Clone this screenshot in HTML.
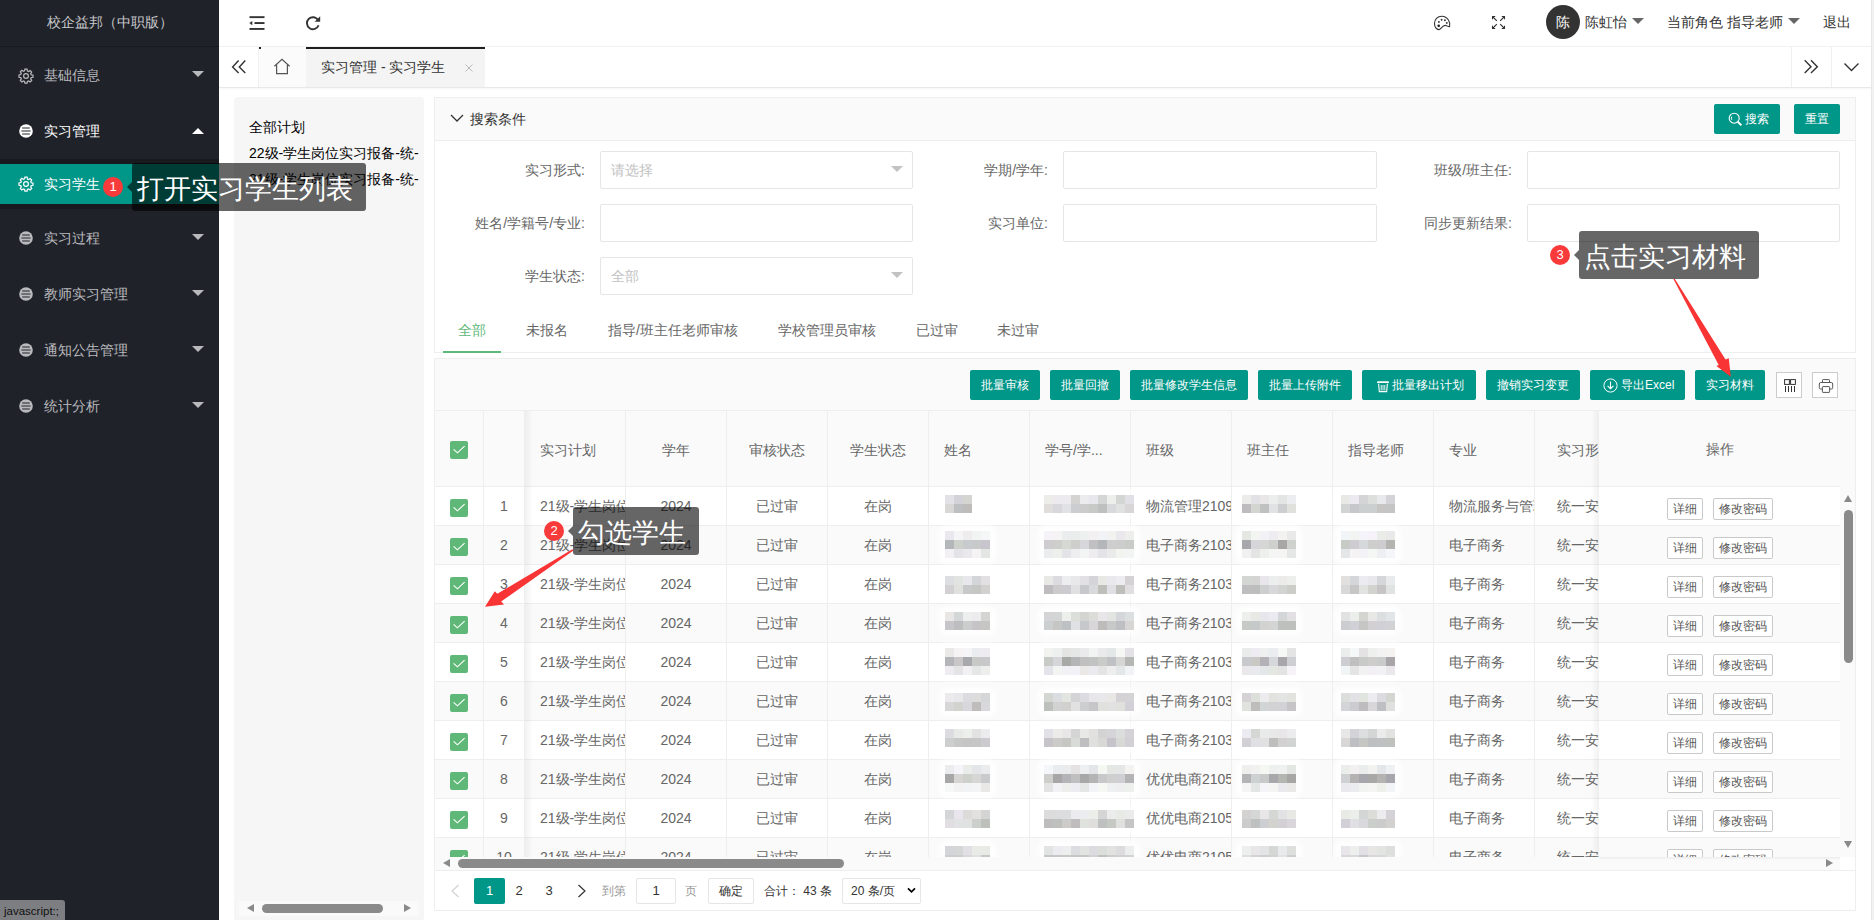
<!DOCTYPE html><html><head><meta charset="utf-8"><style>
*{margin:0;padding:0;box-sizing:border-box}
html,body{width:1874px;height:920px;overflow:hidden;background:#fff;font-family:"Liberation Sans",sans-serif;font-size:14px;color:#333}
.ab{position:absolute}
.t{position:absolute;white-space:nowrap;line-height:20px}
.sb{left:0;top:0;width:219px;height:920px;background:#20222a}
.mi{color:#b9babd}
.tri-d{width:0;height:0;border-left:6px solid transparent;border-right:6px solid transparent;border-top:6px solid #b9babd}
.tri-u{width:0;height:0;border-left:6px solid transparent;border-right:6px solid transparent;border-bottom:6px solid #fff}
.btn{position:absolute;height:30px;background:#009688;color:#fff;font-size:12px;line-height:31px;text-align:center;border-radius:2px;white-space:nowrap}
.inp{position:absolute;height:38px;border:1px solid #e6e6e6;background:#fff;border-radius:2px}
.lbl{position:absolute;color:#666;text-align:right;white-space:nowrap;line-height:20px}
.cb{position:absolute;width:18px;height:18px;background:#5fb878;border-radius:2px}
.cell{position:absolute;color:#666;white-space:nowrap;overflow:hidden;line-height:20px}
.ob{position:absolute;height:22px;border:1px solid #c9c9c9;background:#fff;color:#555;font-size:12px;line-height:20px;text-align:center;border-radius:2px}
.tip{position:absolute;height:48px;background:rgba(0,0,0,.6);border-radius:3px;color:#fff;font-size:27px;line-height:53px;text-align:left;padding-left:5px;white-space:nowrap}
.badge{position:absolute;width:20px;height:20px;border-radius:10px;background:#f83a3a;color:#fff;font-size:13px;line-height:20px;text-align:center}
</style></head><body>

<div class="ab sb"></div>
<div class="ab" style="left:0;top:46px;width:219px;height:1px;background:#1a1b21"></div>
<div class="t" style="left:0;top:12px;width:219px;text-align:center;color:#c9cacc">校企益邦（中职版）</div>
<svg class="ab" style="left:18px;top:68px" width="16" height="16" viewBox="0 0 16 16"><g fill="none" stroke="#b9babd" stroke-width="1.2"><path d="M6.9 1.2h2.2l.35 1.8 1.2.5 1.5-1 1.55 1.55-1 1.5.5 1.2 1.8.35v2.2l-1.8.35-.5 1.2 1 1.5-1.55 1.55-1.5-1-1.2.5-.35 1.8H6.9l-.35-1.8-1.2-.5-1.5 1-1.55-1.55 1-1.5-.5-1.2-1.8-.35V6.9l1.8-.35.5-1.2-1-1.5L3.85 2.3l1.5 1 1.2-.5z"/><circle cx="8" cy="8" r="2.4"/></g></svg>
<div class="t" style="left:44px;top:65px;color:#b9babd">基础信息</div>
<div class="ab tri-d" style="left:192px;top:71px"></div>
<svg class="ab" style="left:19px;top:124px" width="14" height="14" viewBox="0 0 14 14"><circle cx="7" cy="7" r="6.8" fill="#fff"/><path d="M3.2 4h7.6M2.4 7h9.2M3.2 10h7.6" stroke="#20222a" stroke-width="1"/></svg>
<div class="t" style="left:44px;top:121px;color:#fff">实习管理</div>
<div class="ab tri-u" style="left:192px;top:128px"></div>
<svg class="ab" style="left:19px;top:231px" width="14" height="14" viewBox="0 0 14 14"><circle cx="7" cy="7" r="6.8" fill="#b9babd"/><path d="M3.2 4h7.6M2.4 7h9.2M3.2 10h7.6" stroke="#20222a" stroke-width="1"/></svg>
<div class="t" style="left:44px;top:228px;color:#b9babd">实习过程</div>
<div class="ab tri-d" style="left:192px;top:234px"></div>
<svg class="ab" style="left:19px;top:287px" width="14" height="14" viewBox="0 0 14 14"><circle cx="7" cy="7" r="6.8" fill="#b9babd"/><path d="M3.2 4h7.6M2.4 7h9.2M3.2 10h7.6" stroke="#20222a" stroke-width="1"/></svg>
<div class="t" style="left:44px;top:284px;color:#b9babd">教师实习管理</div>
<div class="ab tri-d" style="left:192px;top:290px"></div>
<svg class="ab" style="left:19px;top:343px" width="14" height="14" viewBox="0 0 14 14"><circle cx="7" cy="7" r="6.8" fill="#b9babd"/><path d="M3.2 4h7.6M2.4 7h9.2M3.2 10h7.6" stroke="#20222a" stroke-width="1"/></svg>
<div class="t" style="left:44px;top:340px;color:#b9babd">通知公告管理</div>
<div class="ab tri-d" style="left:192px;top:346px"></div>
<svg class="ab" style="left:19px;top:399px" width="14" height="14" viewBox="0 0 14 14"><circle cx="7" cy="7" r="6.8" fill="#b9babd"/><path d="M3.2 4h7.6M2.4 7h9.2M3.2 10h7.6" stroke="#20222a" stroke-width="1"/></svg>
<div class="t" style="left:44px;top:396px;color:#b9babd">统计分析</div>
<div class="ab tri-d" style="left:192px;top:402px"></div>
<div class="ab" style="left:0;top:159px;width:219px;height:50px;background:#191a20"></div>
<div class="ab" style="left:0;top:164px;width:219px;height:40px;background:#009688"></div>
<svg class="ab" style="left:18px;top:176px" width="16" height="16" viewBox="0 0 16 16"><g fill="none" stroke="#fff" stroke-width="1.2"><path d="M6.9 1.2h2.2l.35 1.8 1.2.5 1.5-1 1.55 1.55-1 1.5.5 1.2 1.8.35v2.2l-1.8.35-.5 1.2 1 1.5-1.55 1.55-1.5-1-1.2.5-.35 1.8H6.9l-.35-1.8-1.2-.5-1.5 1-1.55-1.55 1-1.5-.5-1.2-1.8-.35V6.9l1.8-.35.5-1.2-1-1.5L3.85 2.3l1.5 1 1.2-.5z"/><circle cx="8" cy="8" r="2.4"/></g></svg>
<div class="t" style="left:44px;top:174px;color:#fff">实习学生</div>
<div class="ab" style="left:0;top:900px;width:65px;height:20px;background:#7d7e82;border-top-right-radius:3px"></div>
<div class="t" style="left:4px;top:902px;font-size:11.5px;line-height:18px;color:#111">javascript:;</div>
<div class="ab" style="left:219px;top:46px;width:1652px;height:1px;background:#f0f0f0"></div>
<svg class="ab" style="left:248px;top:14px" width="18" height="18" viewBox="0 0 18 18"><g fill="#333"><rect x="1.5" y="2.2" width="15" height="1.9"/><rect x="6.5" y="8.1" width="10" height="1.9"/><rect x="1.5" y="14" width="15" height="1.9"/><path d="M1.3 9.05L4.3 6.9v4.3z"/></g></svg>
<svg class="ab" style="left:304px;top:14px" width="18" height="18" viewBox="0 0 18 18"><path d="M14.2 6.3A6 6 0 1 0 14.6 11.2" fill="none" stroke="#333" stroke-width="1.9"/><path d="M16.2 2.2v5.6h-5.6z" fill="#333"/></svg>
<svg class="ab" style="left:1430px;top:12px" width="24" height="20" viewBox="0 0 24 20"><path d="M19.6 14.5C20.9 10.5 17.6 4.4 12 4.3C7.2 4.2 4.5 7.8 4.5 11.4C4.5 15.2 6.6 17.6 8.8 17.6C11 17.6 12 13.4 15.2 13.4C17 13.4 18.5 15.2 19.6 14.5Z" fill="none" stroke="#333" stroke-width="1.1"/><circle cx="8.9" cy="9.9" r=".95" fill="#333"/><circle cx="11.6" cy="7.8" r=".95" fill="#333"/><circle cx="14.9" cy="8.2" r=".95" fill="#333"/><circle cx="16.8" cy="10.9" r=".95" fill="#333"/><circle cx="8.7" cy="13.8" r="1.35" fill="#222"/></svg>
<svg class="ab" style="left:1490px;top:14px" width="17" height="17" viewBox="0 0 17 17"><g fill="none" stroke="#333" stroke-width="1.1"><path d="M5.2 2.5H2.5V5.2M2.5 2.5l4.3 4.3M11.8 2.5h2.7v2.7M14.5 2.5l-4.3 4.3M2.5 11.8v2.7h2.7M2.5 14.5l4.3-4.3M14.5 11.8v2.7h-2.7M14.5 14.5l-4.3-4.3"/></g></svg>
<div class="ab" style="left:1546px;top:5px;width:34px;height:34px;border-radius:17px;background:#333;color:#fff;text-align:center;line-height:34px">陈</div>
<div class="t" style="left:1585px;top:12px;color:#333">陈虹怡</div>
<div class="ab" style="left:1632px;top:18px;width:0;height:0;border-left:6px solid transparent;border-right:6px solid transparent;border-top:6px solid #666"></div>
<div class="t" style="left:1667px;top:12px;color:#333">当前角色 指导老师</div>
<div class="ab" style="left:1788px;top:18px;width:0;height:0;border-left:6px solid transparent;border-right:6px solid transparent;border-top:6px solid #666"></div>
<div class="t" style="left:1823px;top:12px;color:#333">退出</div>
<div class="ab" style="left:1871px;top:0;width:3px;height:920px;background:#f2f2f2;border-left:1px solid #e8e8e8"></div>
<div class="ab" style="left:219px;top:87px;width:1652px;height:1px;background:#e8e8e8"></div>
<div class="ab" style="left:219px;top:88px;width:1652px;height:2px;background:linear-gradient(#f6f6f6,#fff)"></div>
<div class="ab" style="left:258px;top:47px;width:1px;height:40px;background:#f0f0f0"></div>
<div class="ab" style="left:259px;top:47px;width:47px;height:40px;background:#fbfbfb"></div>
<div class="ab" style="left:259px;top:47px;width:2px;height:2px;background:#222"></div>
<svg class="ab" style="left:231px;top:59px" width="16" height="16" viewBox="0 0 16 16"><path d="M7.6 1.5L1.6 7.9l6 6.1M14.3 1.5l-6 6.4 6 6.1" fill="none" stroke="#333" stroke-width="1.4"/></svg>
<svg class="ab" style="left:273px;top:58px" width="18" height="17" viewBox="0 0 18 17"><path d="M1.4 8.3L9 1.2l7.6 7.1M3.6 6.5v9.2h10.8V6.5" fill="none" stroke="#555" stroke-width="1.2"/></svg>
<div class="ab" style="left:306px;top:47px;width:179px;height:40px;background:#f4f4f4"></div>
<div class="ab" style="left:306px;top:47px;width:179px;height:2px;background:#1e1e1e"></div>
<div class="t" style="left:321px;top:57px;color:#333">实习管理 - 实习学生</div>
<svg class="ab" style="left:465px;top:64px" width="8" height="8" viewBox="0 0 8 8"><path d="M.5.5l7 7M7.5.5l-7 7" stroke="#bbb" stroke-width="1"/></svg>
<div class="ab" style="left:1791px;top:47px;width:1px;height:40px;background:#f0f0f0"></div>
<div class="ab" style="left:1831px;top:47px;width:1px;height:40px;background:#f0f0f0"></div>
<svg class="ab" style="left:1803px;top:59px" width="16" height="16" viewBox="0 0 16 16"><path d="M1.7 1.3l6.3 6.4-6.3 6.3M8 1.3l6.3 6.4L8 14" fill="none" stroke="#333" stroke-width="1.4"/></svg>
<svg class="ab" style="left:1843px;top:62px" width="17" height="11" viewBox="0 0 17 11"><path d="M1.5 1.5l7 7 7-7" fill="none" stroke="#333" stroke-width="1.4"/></svg>
<div class="ab" style="left:234px;top:97px;width:190px;height:823px;background:#f6f6f6;border-radius:4px 4px 0 0"></div>
<div class="t" style="left:249px;top:117px;color:#000">全部计划</div>
<div class="t" style="left:249px;top:143px;color:#000;width:172px;overflow:hidden">22级-学生岗位实习报备-统-</div>
<div class="t" style="left:249px;top:169px;color:#000;width:172px;overflow:hidden">21级-学生岗位实习报备-统-</div>
<div class="ab" style="left:239px;top:901px;width:180px;height:15px;background:#fafafa"></div>
<div class="ab" style="left:247px;top:904px;width:0;height:0;border-top:4.5px solid transparent;border-bottom:4.5px solid transparent;border-right:7px solid #8a8a8a"></div>
<div class="ab" style="left:404px;top:904px;width:0;height:0;border-top:4.5px solid transparent;border-bottom:4.5px solid transparent;border-left:7px solid #8a8a8a"></div>
<div class="ab" style="left:262px;top:904px;width:121px;height:9px;border-radius:4.5px;background:#8a8a8a"></div>
<div class="ab" style="left:434px;top:97px;width:1422px;height:256px;border:1px solid #eee;border-bottom:0"></div>
<div class="ab" style="left:435px;top:98px;width:1420px;height:42px;background:#fafafa"></div>
<div class="ab" style="left:435px;top:140px;width:1420px;height:1px;background:#eee"></div>
<svg class="ab" style="left:450px;top:114px" width="14" height="9" viewBox="0 0 14 9"><path d="M1 1l6 6 6-6" fill="none" stroke="#333" stroke-width="1.3"/></svg>
<div class="t" style="left:470px;top:109px;color:#333">搜索条件</div>
<div class="btn" style="left:1714px;top:104px;width:66px"><svg style="position:absolute;left:14px;top:8px" width="15" height="15" viewBox="0 0 15 15"><circle cx="6.2" cy="6.2" r="5" fill="none" stroke="#fff" stroke-width="1.1"/><path d="M3.8 4.6a3 3 0 0 0 0 3.2" fill="none" stroke="#fff" stroke-width="1"/><path d="M9.8 9.8l3.6 3.6" stroke="#fff" stroke-width="2"/></svg><span style="position:absolute;left:31px;top:0">搜索</span></div>
<div class="btn" style="left:1794px;top:104px;width:46px">重置</div>
<div class="lbl" style="left:385px;top:160px;width:200px">实习形式:</div>
<div class="inp" style="left:600px;top:151px;width:313px"></div>
<div class="t" style="left:611px;top:160px;color:#c2c2c2">请选择</div>
<div class="ab" style="left:891px;top:166px;width:0;height:0;border-left:6px solid transparent;border-right:6px solid transparent;border-top:6px solid #c2c2c2"></div>
<div class="lbl" style="left:848px;top:160px;width:200px">学期/学年:</div>
<div class="inp" style="left:1063px;top:151px;width:314px"></div>
<div class="lbl" style="left:1312px;top:160px;width:200px">班级/班主任:</div>
<div class="inp" style="left:1527px;top:151px;width:313px"></div>
<div class="lbl" style="left:385px;top:213px;width:200px">姓名/学籍号/专业:</div>
<div class="inp" style="left:600px;top:204px;width:313px"></div>
<div class="lbl" style="left:848px;top:213px;width:200px">实习单位:</div>
<div class="inp" style="left:1063px;top:204px;width:314px"></div>
<div class="lbl" style="left:1312px;top:213px;width:200px">同步更新结果:</div>
<div class="inp" style="left:1527px;top:204px;width:313px"></div>
<div class="lbl" style="left:385px;top:266px;width:200px">学生状态:</div>
<div class="inp" style="left:600px;top:257px;width:313px"></div>
<div class="t" style="left:611px;top:266px;color:#c2c2c2">全部</div>
<div class="ab" style="left:891px;top:272px;width:0;height:0;border-left:6px solid transparent;border-right:6px solid transparent;border-top:6px solid #c2c2c2"></div>
<div class="ab" style="left:435px;top:352px;width:1420px;height:1px;background:#eee"></div>
<div class="ab" style="left:443px;top:351px;width:58px;height:2px;background:#5fb878"></div>
<div class="t" style="left:372px;width:200px;text-align:center;top:320px;color:#5fb878">全部</div>
<div class="t" style="left:447px;width:200px;text-align:center;top:320px;color:#666">未报名</div>
<div class="t" style="left:573px;width:200px;text-align:center;top:320px;color:#666">指导/班主任老师审核</div>
<div class="t" style="left:727px;width:200px;text-align:center;top:320px;color:#666">学校管理员审核</div>
<div class="t" style="left:837px;width:200px;text-align:center;top:320px;color:#666">已过审</div>
<div class="t" style="left:918px;width:200px;text-align:center;top:320px;color:#666">未过审</div>
<div class="ab" style="left:434px;top:358px;width:1422px;height:553px;border:1px solid #eee"></div>
<div class="ab" style="left:435px;top:359px;width:1420px;height:51px;background:#fafafa"></div>
<div class="ab" style="left:435px;top:410px;width:1420px;height:1px;background:#eee"></div>
<div class="btn" style="left:970px;top:370px;width:70px">批量审核</div>
<div class="btn" style="left:1050px;top:370px;width:70px">批量回撤</div>
<div class="btn" style="left:1130px;top:370px;width:118px">批量修改学生信息</div>
<div class="btn" style="left:1258px;top:370px;width:94px">批量上传附件</div>
<div class="btn" style="left:1362px;top:370px;width:114px"><svg style="position:absolute;left:14px;top:10px" width="14" height="14" viewBox="0 0 14 14"><rect x="1" y="1.3" width="12" height="1.8" rx=".9" fill="#fff"/><path d="M2.6 3.6L3.3 11.6H10.7L11.4 3.6" fill="none" stroke="#fff" stroke-width="1.1"/><path d="M5.2 5v5.5M7 5v5.5M8.8 5v5.5" stroke="#fff" stroke-width=".9"/></svg><span style="position:absolute;left:30px;top:0">批量移出计划</span></div>
<div class="btn" style="left:1486px;top:370px;width:94px">撤销实习变更</div>
<div class="btn" style="left:1590px;top:370px;width:95px"><svg style="position:absolute;left:13px;top:8px" width="15" height="15" viewBox="0 0 15 15"><circle cx="7.5" cy="7.5" r="6.6" fill="none" stroke="#fff" stroke-width="1"/><path d="M7.5 3.5v7M4.6 7.8l2.9 2.9 2.9-2.9" fill="none" stroke="#fff" stroke-width="1.1"/></svg><span style="position:absolute;left:31px;top:0">导出Excel</span></div>
<div class="btn" style="left:1695px;top:370px;width:70px">实习材料</div>
<div class="ab" style="left:1776px;top:372px;width:26px;height:26px;border:1px solid #ccc;background:#fff"></div>
<svg class="ab" style="left:1781px;top:377px" width="16" height="16" viewBox="0 0 16 16"><g fill="none" stroke="#333" stroke-width="1"><rect x="3.6" y="2.6" width="4.8" height="4.8"/><rect x="9.6" y="2.6" width="4.8" height="4.8"/><path d="M4.5 9v6M7.5 9v6M10.5 9v6M13.5 9v6"/></g></svg>
<div class="ab" style="left:1812px;top:372px;width:26px;height:26px;border:1px solid #ccc;background:#fff"></div>
<svg class="ab" style="left:1817px;top:377px" width="18" height="18" viewBox="0 0 18 18"><g fill="none" stroke="#555" stroke-width="1"><path d="M5.5 5.5V3.2Q5.5 2.6 6.1 2.6h5.8q.6 0 .6.6V5.5"/><path d="M5.2 12H3.6q-1.3 0-1.3-1.3V7q0-1.5 1.5-1.5h10.4q1.5 0 1.5 1.5v3.7q0 1.3-1.3 1.3h-1.6"/><rect x="5.4" y="9.6" width="7.2" height="5.8" rx=".6"/></g></svg>
<div class="ab" style="left:435px;top:411px;width:1420px;height:76px;background:#fafafa"></div>
<div class="ab" style="left:435px;top:486px;width:1405px;height:1px;background:#eee"></div>
<div class="ab" style="left:435px;top:487px;width:1405px;height:39px;background:#fff"></div>
<div class="ab" style="left:435px;top:525px;width:1405px;height:1px;background:#eee"></div>
<div class="ab" style="left:435px;top:526px;width:1405px;height:39px;background:#fafafa"></div>
<div class="ab" style="left:435px;top:564px;width:1405px;height:1px;background:#eee"></div>
<div class="ab" style="left:435px;top:565px;width:1405px;height:39px;background:#fff"></div>
<div class="ab" style="left:435px;top:603px;width:1405px;height:1px;background:#eee"></div>
<div class="ab" style="left:435px;top:604px;width:1405px;height:39px;background:#fafafa"></div>
<div class="ab" style="left:435px;top:642px;width:1405px;height:1px;background:#eee"></div>
<div class="ab" style="left:435px;top:643px;width:1405px;height:39px;background:#fff"></div>
<div class="ab" style="left:435px;top:681px;width:1405px;height:1px;background:#eee"></div>
<div class="ab" style="left:435px;top:682px;width:1405px;height:39px;background:#fafafa"></div>
<div class="ab" style="left:435px;top:720px;width:1405px;height:1px;background:#eee"></div>
<div class="ab" style="left:435px;top:721px;width:1405px;height:39px;background:#fff"></div>
<div class="ab" style="left:435px;top:759px;width:1405px;height:1px;background:#eee"></div>
<div class="ab" style="left:435px;top:760px;width:1405px;height:39px;background:#fafafa"></div>
<div class="ab" style="left:435px;top:798px;width:1405px;height:1px;background:#eee"></div>
<div class="ab" style="left:435px;top:799px;width:1405px;height:39px;background:#fff"></div>
<div class="ab" style="left:435px;top:837px;width:1405px;height:1px;background:#eee"></div>
<div class="ab" style="left:435px;top:838px;width:1405px;height:19px;background:#fafafa"></div>
<div class="ab" style="left:483px;top:411px;width:1px;height:446px;background:#eee"></div>
<div class="ab" style="left:524px;top:411px;width:1px;height:446px;background:#eee"></div>
<div class="ab" style="left:625px;top:411px;width:1px;height:446px;background:#eee"></div>
<div class="ab" style="left:726px;top:411px;width:1px;height:446px;background:#eee"></div>
<div class="ab" style="left:827px;top:411px;width:1px;height:446px;background:#eee"></div>
<div class="ab" style="left:928px;top:411px;width:1px;height:446px;background:#eee"></div>
<div class="ab" style="left:1029px;top:411px;width:1px;height:446px;background:#eee"></div>
<div class="ab" style="left:1130px;top:411px;width:1px;height:446px;background:#eee"></div>
<div class="ab" style="left:1231px;top:411px;width:1px;height:446px;background:#eee"></div>
<div class="ab" style="left:1332px;top:411px;width:1px;height:446px;background:#eee"></div>
<div class="ab" style="left:1433px;top:411px;width:1px;height:446px;background:#eee"></div>
<div class="ab" style="left:1534px;top:411px;width:1px;height:446px;background:#eee"></div>
<div class="cell" style="left:540px;top:440px;width:84px">实习计划</div>
<div class="cell" style="left:626px;top:440px;width:100px;text-align:center">学年</div>
<div class="cell" style="left:727px;top:440px;width:100px;text-align:center">审核状态</div>
<div class="cell" style="left:828px;top:440px;width:100px;text-align:center">学生状态</div>
<div class="cell" style="left:944px;top:440px;width:84px">姓名</div>
<div class="cell" style="left:1045px;top:440px;width:84px">学号/学...</div>
<div class="cell" style="left:1146px;top:440px;width:84px">班级</div>
<div class="cell" style="left:1247px;top:440px;width:84px">班主任</div>
<div class="cell" style="left:1348px;top:440px;width:84px">指导老师</div>
<div class="cell" style="left:1449px;top:440px;width:84px">专业</div>
<div class="cell" style="left:1535px;top:440px;width:100px;text-align:center">实习形式</div>
<div class="cb" style="left:450px;top:441px"><svg style="position:absolute;left:3px;top:4px" width="12" height="10" viewBox="0 0 12 10"><path d="M.6 4.4L4.4 7.8L11.6 1.1" fill="none" stroke="#fff" stroke-width="1.1"/></svg></div>
<div class="ab" style="left:435px;top:487px;width:1405px;height:370px;overflow:hidden"><div class="ab" style="left:-435px;top:-487px;width:1874px;height:920px"><div class="cb" style="left:450px;top:499px"><svg style="position:absolute;left:3px;top:4px" width="12" height="10" viewBox="0 0 12 10"><path d="M.6 4.4L4.4 7.8L11.6 1.1" fill="none" stroke="#fff" stroke-width="1.1"/></svg></div><div class="cell" style="left:484px;top:496px;width:40px;text-align:center">1</div><div class="cell" style="left:540px;top:496px;width:85px">21级-学生岗位实习报备</div><div class="cell" style="left:626px;top:496px;width:100px;text-align:center">2024</div><div class="cell" style="left:727px;top:496px;width:100px;text-align:center">已过审</div><div class="cell" style="left:828px;top:496px;width:100px;text-align:center">在岗</div><div class="ab" style="left:938px;top:489px;width:41px;height:30px;border-radius:9px;background:rgba(255,255,255,.75);filter:blur(2px)"></div><div class="ab" style="left:945px;top:495px;width:9px;height:9px;background:rgb(226,225,229)"></div><div class="ab" style="left:954px;top:495px;width:9px;height:9px;background:rgb(212,210,217)"></div><div class="ab" style="left:963px;top:495px;width:9px;height:9px;background:rgb(212,212,209)"></div><div class="ab" style="left:945px;top:504px;width:9px;height:9px;background:rgb(216,215,213)"></div><div class="ab" style="left:954px;top:504px;width:9px;height:9px;background:rgb(190,191,193)"></div><div class="ab" style="left:963px;top:504px;width:9px;height:9px;background:rgb(190,189,188)"></div><div class="ab" style="left:1037px;top:489px;width:104px;height:30px;border-radius:9px;background:rgba(255,255,255,.75);filter:blur(2px)"></div><div class="ab" style="left:1044px;top:495px;width:9px;height:9px;background:rgb(236,237,233)"></div><div class="ab" style="left:1053px;top:495px;width:9px;height:9px;background:rgb(236,234,236)"></div><div class="ab" style="left:1062px;top:495px;width:9px;height:9px;background:rgb(236,234,239)"></div><div class="ab" style="left:1071px;top:495px;width:9px;height:9px;background:rgb(212,211,209)"></div><div class="ab" style="left:1080px;top:495px;width:9px;height:9px;background:rgb(236,235,237)"></div><div class="ab" style="left:1089px;top:495px;width:9px;height:9px;background:rgb(232,231,237)"></div><div class="ab" style="left:1098px;top:495px;width:9px;height:9px;background:rgb(212,214,213)"></div><div class="ab" style="left:1107px;top:495px;width:9px;height:9px;background:rgb(236,239,235)"></div><div class="ab" style="left:1116px;top:495px;width:9px;height:9px;background:rgb(212,214,212)"></div><div class="ab" style="left:1125px;top:495px;width:9px;height:9px;background:rgb(226,224,231)"></div><div class="ab" style="left:1044px;top:504px;width:9px;height:9px;background:rgb(224,222,221)"></div><div class="ab" style="left:1053px;top:504px;width:9px;height:9px;background:rgb(216,215,220)"></div><div class="ab" style="left:1062px;top:504px;width:9px;height:9px;background:rgb(224,226,227)"></div><div class="ab" style="left:1071px;top:504px;width:9px;height:9px;background:rgb(204,205,208)"></div><div class="ab" style="left:1080px;top:504px;width:9px;height:9px;background:rgb(204,204,204)"></div><div class="ab" style="left:1089px;top:504px;width:9px;height:9px;background:rgb(198,201,198)"></div><div class="ab" style="left:1098px;top:504px;width:9px;height:9px;background:rgb(190,192,191)"></div><div class="ab" style="left:1107px;top:504px;width:9px;height:9px;background:rgb(216,217,218)"></div><div class="ab" style="left:1116px;top:504px;width:9px;height:9px;background:rgb(224,225,225)"></div><div class="ab" style="left:1125px;top:504px;width:9px;height:9px;background:rgb(216,214,214)"></div><div class="cell" style="left:1146px;top:496px;width:85px">物流管理2109</div><div class="ab" style="left:1235px;top:489px;width:68px;height:30px;border-radius:9px;background:rgba(255,255,255,.75);filter:blur(2px)"></div><div class="ab" style="left:1242px;top:495px;width:9px;height:9px;background:rgb(236,237,235)"></div><div class="ab" style="left:1251px;top:495px;width:9px;height:9px;background:rgb(226,225,230)"></div><div class="ab" style="left:1260px;top:495px;width:9px;height:9px;background:rgb(232,230,230)"></div><div class="ab" style="left:1269px;top:495px;width:9px;height:9px;background:rgb(236,238,238)"></div><div class="ab" style="left:1278px;top:495px;width:9px;height:9px;background:rgb(226,229,228)"></div><div class="ab" style="left:1287px;top:495px;width:9px;height:9px;background:rgb(236,237,240)"></div><div class="ab" style="left:1242px;top:504px;width:9px;height:9px;background:rgb(190,188,191)"></div><div class="ab" style="left:1251px;top:504px;width:9px;height:9px;background:rgb(210,213,208)"></div><div class="ab" style="left:1260px;top:504px;width:9px;height:9px;background:rgb(190,193,191)"></div><div class="ab" style="left:1269px;top:504px;width:9px;height:9px;background:rgb(224,226,228)"></div><div class="ab" style="left:1278px;top:504px;width:9px;height:9px;background:rgb(204,207,207)"></div><div class="ab" style="left:1287px;top:504px;width:9px;height:9px;background:rgb(224,224,221)"></div><div class="ab" style="left:1334px;top:489px;width:68px;height:30px;border-radius:9px;background:rgba(255,255,255,.75);filter:blur(2px)"></div><div class="ab" style="left:1341px;top:495px;width:9px;height:9px;background:rgb(232,232,231)"></div><div class="ab" style="left:1350px;top:495px;width:9px;height:9px;background:rgb(236,234,240)"></div><div class="ab" style="left:1359px;top:495px;width:9px;height:9px;background:rgb(212,211,213)"></div><div class="ab" style="left:1368px;top:495px;width:9px;height:9px;background:rgb(220,223,220)"></div><div class="ab" style="left:1377px;top:495px;width:9px;height:9px;background:rgb(232,233,236)"></div><div class="ab" style="left:1386px;top:495px;width:9px;height:9px;background:rgb(212,211,216)"></div><div class="ab" style="left:1341px;top:504px;width:9px;height:9px;background:rgb(210,212,211)"></div><div class="ab" style="left:1350px;top:504px;width:9px;height:9px;background:rgb(198,199,203)"></div><div class="ab" style="left:1359px;top:504px;width:9px;height:9px;background:rgb(204,207,207)"></div><div class="ab" style="left:1368px;top:504px;width:9px;height:9px;background:rgb(204,207,207)"></div><div class="ab" style="left:1377px;top:504px;width:9px;height:9px;background:rgb(198,197,196)"></div><div class="ab" style="left:1386px;top:504px;width:9px;height:9px;background:rgb(198,197,198)"></div><div class="cell" style="left:1449px;top:496px;width:85px">物流服务与管理</div><div class="cell" style="left:1535px;top:496px;width:100px;text-align:center">统一安排</div><div class="cb" style="left:450px;top:538px"><svg style="position:absolute;left:3px;top:4px" width="12" height="10" viewBox="0 0 12 10"><path d="M.6 4.4L4.4 7.8L11.6 1.1" fill="none" stroke="#fff" stroke-width="1.1"/></svg></div><div class="cell" style="left:484px;top:535px;width:40px;text-align:center">2</div><div class="cell" style="left:540px;top:535px;width:85px">21级-学生岗位实习报备</div><div class="cell" style="left:626px;top:535px;width:100px;text-align:center">2024</div><div class="cell" style="left:727px;top:535px;width:100px;text-align:center">已过审</div><div class="cell" style="left:828px;top:535px;width:100px;text-align:center">在岗</div><div class="ab" style="left:938px;top:525px;width:59px;height:39px;border-radius:9px;background:rgba(255,255,255,.75);filter:blur(2px)"></div><div class="ab" style="left:945px;top:531px;width:9px;height:9px;background:rgb(234,232,238)"></div><div class="ab" style="left:954px;top:531px;width:9px;height:9px;background:rgb(245,244,246)"></div><div class="ab" style="left:963px;top:531px;width:9px;height:9px;background:rgb(238,236,237)"></div><div class="ab" style="left:972px;top:531px;width:9px;height:9px;background:rgb(242,244,244)"></div><div class="ab" style="left:981px;top:531px;width:9px;height:9px;background:rgb(245,247,247)"></div><div class="ab" style="left:945px;top:540px;width:9px;height:9px;background:rgb(180,183,185)"></div><div class="ab" style="left:954px;top:540px;width:9px;height:9px;background:rgb(206,209,203)"></div><div class="ab" style="left:963px;top:540px;width:9px;height:9px;background:rgb(200,203,205)"></div><div class="ab" style="left:972px;top:540px;width:9px;height:9px;background:rgb(200,201,203)"></div><div class="ab" style="left:981px;top:540px;width:9px;height:9px;background:rgb(200,198,204)"></div><div class="ab" style="left:945px;top:549px;width:9px;height:9px;background:rgb(242,240,242)"></div><div class="ab" style="left:954px;top:549px;width:9px;height:9px;background:rgb(228,227,232)"></div><div class="ab" style="left:963px;top:549px;width:9px;height:9px;background:rgb(234,232,236)"></div><div class="ab" style="left:972px;top:549px;width:9px;height:9px;background:rgb(245,243,243)"></div><div class="ab" style="left:981px;top:549px;width:9px;height:9px;background:rgb(228,230,227)"></div><div class="ab" style="left:1037px;top:525px;width:104px;height:39px;border-radius:9px;background:rgba(255,255,255,.75);filter:blur(2px)"></div><div class="ab" style="left:1044px;top:531px;width:9px;height:9px;background:rgb(245,243,247)"></div><div class="ab" style="left:1053px;top:531px;width:9px;height:9px;background:rgb(245,243,243)"></div><div class="ab" style="left:1062px;top:531px;width:9px;height:9px;background:rgb(234,236,237)"></div><div class="ab" style="left:1071px;top:531px;width:9px;height:9px;background:rgb(234,237,235)"></div><div class="ab" style="left:1080px;top:531px;width:9px;height:9px;background:rgb(238,240,240)"></div><div class="ab" style="left:1089px;top:531px;width:9px;height:9px;background:rgb(242,240,240)"></div><div class="ab" style="left:1098px;top:531px;width:9px;height:9px;background:rgb(242,243,246)"></div><div class="ab" style="left:1107px;top:531px;width:9px;height:9px;background:rgb(242,242,240)"></div><div class="ab" style="left:1116px;top:531px;width:9px;height:9px;background:rgb(234,232,236)"></div><div class="ab" style="left:1125px;top:531px;width:9px;height:9px;background:rgb(238,239,237)"></div><div class="ab" style="left:1044px;top:540px;width:9px;height:9px;background:rgb(206,204,206)"></div><div class="ab" style="left:1053px;top:540px;width:9px;height:9px;background:rgb(206,206,205)"></div><div class="ab" style="left:1062px;top:540px;width:9px;height:9px;background:rgb(214,216,211)"></div><div class="ab" style="left:1071px;top:540px;width:9px;height:9px;background:rgb(206,206,204)"></div><div class="ab" style="left:1080px;top:540px;width:9px;height:9px;background:rgb(214,214,219)"></div><div class="ab" style="left:1089px;top:540px;width:9px;height:9px;background:rgb(192,191,194)"></div><div class="ab" style="left:1098px;top:540px;width:9px;height:9px;background:rgb(180,182,185)"></div><div class="ab" style="left:1107px;top:540px;width:9px;height:9px;background:rgb(206,206,206)"></div><div class="ab" style="left:1116px;top:540px;width:9px;height:9px;background:rgb(206,205,206)"></div><div class="ab" style="left:1125px;top:540px;width:9px;height:9px;background:rgb(200,203,200)"></div><div class="ab" style="left:1044px;top:549px;width:9px;height:9px;background:rgb(234,236,238)"></div><div class="ab" style="left:1053px;top:549px;width:9px;height:9px;background:rgb(238,241,235)"></div><div class="ab" style="left:1062px;top:549px;width:9px;height:9px;background:rgb(228,228,232)"></div><div class="ab" style="left:1071px;top:549px;width:9px;height:9px;background:rgb(238,237,240)"></div><div class="ab" style="left:1080px;top:549px;width:9px;height:9px;background:rgb(242,245,244)"></div><div class="ab" style="left:1089px;top:549px;width:9px;height:9px;background:rgb(238,236,238)"></div><div class="ab" style="left:1098px;top:549px;width:9px;height:9px;background:rgb(228,227,232)"></div><div class="ab" style="left:1107px;top:549px;width:9px;height:9px;background:rgb(234,234,234)"></div><div class="ab" style="left:1116px;top:549px;width:9px;height:9px;background:rgb(242,244,239)"></div><div class="ab" style="left:1125px;top:549px;width:9px;height:9px;background:rgb(242,245,244)"></div><div class="cell" style="left:1146px;top:535px;width:85px">电子商务2103</div><div class="ab" style="left:1235px;top:525px;width:68px;height:39px;border-radius:9px;background:rgba(255,255,255,.75);filter:blur(2px)"></div><div class="ab" style="left:1242px;top:531px;width:9px;height:9px;background:rgb(228,231,226)"></div><div class="ab" style="left:1251px;top:531px;width:9px;height:9px;background:rgb(242,245,242)"></div><div class="ab" style="left:1260px;top:531px;width:9px;height:9px;background:rgb(242,241,245)"></div><div class="ab" style="left:1269px;top:531px;width:9px;height:9px;background:rgb(238,236,241)"></div><div class="ab" style="left:1278px;top:531px;width:9px;height:9px;background:rgb(242,243,240)"></div><div class="ab" style="left:1287px;top:531px;width:9px;height:9px;background:rgb(234,233,233)"></div><div class="ab" style="left:1242px;top:540px;width:9px;height:9px;background:rgb(168,167,172)"></div><div class="ab" style="left:1251px;top:540px;width:9px;height:9px;background:rgb(214,213,218)"></div><div class="ab" style="left:1260px;top:540px;width:9px;height:9px;background:rgb(214,214,213)"></div><div class="ab" style="left:1269px;top:540px;width:9px;height:9px;background:rgb(206,208,205)"></div><div class="ab" style="left:1278px;top:540px;width:9px;height:9px;background:rgb(168,166,166)"></div><div class="ab" style="left:1287px;top:540px;width:9px;height:9px;background:rgb(206,209,205)"></div><div class="ab" style="left:1242px;top:549px;width:9px;height:9px;background:rgb(242,241,242)"></div><div class="ab" style="left:1251px;top:549px;width:9px;height:9px;background:rgb(228,228,228)"></div><div class="ab" style="left:1260px;top:549px;width:9px;height:9px;background:rgb(238,240,238)"></div><div class="ab" style="left:1269px;top:549px;width:9px;height:9px;background:rgb(245,245,246)"></div><div class="ab" style="left:1278px;top:549px;width:9px;height:9px;background:rgb(245,246,244)"></div><div class="ab" style="left:1287px;top:549px;width:9px;height:9px;background:rgb(228,231,230)"></div><div class="ab" style="left:1334px;top:525px;width:68px;height:39px;border-radius:9px;background:rgba(255,255,255,.75);filter:blur(2px)"></div><div class="ab" style="left:1341px;top:531px;width:9px;height:9px;background:rgb(242,245,247)"></div><div class="ab" style="left:1350px;top:531px;width:9px;height:9px;background:rgb(242,244,241)"></div><div class="ab" style="left:1359px;top:531px;width:9px;height:9px;background:rgb(245,244,250)"></div><div class="ab" style="left:1368px;top:531px;width:9px;height:9px;background:rgb(245,243,249)"></div><div class="ab" style="left:1377px;top:531px;width:9px;height:9px;background:rgb(234,236,231)"></div><div class="ab" style="left:1386px;top:531px;width:9px;height:9px;background:rgb(234,233,233)"></div><div class="ab" style="left:1341px;top:540px;width:9px;height:9px;background:rgb(200,202,198)"></div><div class="ab" style="left:1350px;top:540px;width:9px;height:9px;background:rgb(206,204,208)"></div><div class="ab" style="left:1359px;top:540px;width:9px;height:9px;background:rgb(214,216,219)"></div><div class="ab" style="left:1368px;top:540px;width:9px;height:9px;background:rgb(206,207,204)"></div><div class="ab" style="left:1377px;top:540px;width:9px;height:9px;background:rgb(206,204,206)"></div><div class="ab" style="left:1386px;top:540px;width:9px;height:9px;background:rgb(180,180,177)"></div><div class="ab" style="left:1341px;top:549px;width:9px;height:9px;background:rgb(228,230,232)"></div><div class="ab" style="left:1350px;top:549px;width:9px;height:9px;background:rgb(245,243,243)"></div><div class="ab" style="left:1359px;top:549px;width:9px;height:9px;background:rgb(242,242,247)"></div><div class="ab" style="left:1368px;top:549px;width:9px;height:9px;background:rgb(245,247,245)"></div><div class="ab" style="left:1377px;top:549px;width:9px;height:9px;background:rgb(238,239,243)"></div><div class="ab" style="left:1386px;top:549px;width:9px;height:9px;background:rgb(245,246,250)"></div><div class="cell" style="left:1449px;top:535px;width:85px">电子商务</div><div class="cell" style="left:1535px;top:535px;width:100px;text-align:center">统一安排</div><div class="cb" style="left:450px;top:577px"><svg style="position:absolute;left:3px;top:4px" width="12" height="10" viewBox="0 0 12 10"><path d="M.6 4.4L4.4 7.8L11.6 1.1" fill="none" stroke="#fff" stroke-width="1.1"/></svg></div><div class="cell" style="left:484px;top:574px;width:40px;text-align:center">3</div><div class="cell" style="left:540px;top:574px;width:85px">21级-学生岗位实习报备</div><div class="cell" style="left:626px;top:574px;width:100px;text-align:center">2024</div><div class="cell" style="left:727px;top:574px;width:100px;text-align:center">已过审</div><div class="cell" style="left:828px;top:574px;width:100px;text-align:center">在岗</div><div class="ab" style="left:938px;top:570px;width:59px;height:30px;border-radius:9px;background:rgba(255,255,255,.75);filter:blur(2px)"></div><div class="ab" style="left:945px;top:576px;width:9px;height:9px;background:rgb(220,223,225)"></div><div class="ab" style="left:954px;top:576px;width:9px;height:9px;background:rgb(226,228,226)"></div><div class="ab" style="left:963px;top:576px;width:9px;height:9px;background:rgb(232,231,235)"></div><div class="ab" style="left:972px;top:576px;width:9px;height:9px;background:rgb(212,213,216)"></div><div class="ab" style="left:981px;top:576px;width:9px;height:9px;background:rgb(226,224,226)"></div><div class="ab" style="left:945px;top:585px;width:9px;height:9px;background:rgb(210,208,210)"></div><div class="ab" style="left:954px;top:585px;width:9px;height:9px;background:rgb(224,224,222)"></div><div class="ab" style="left:963px;top:585px;width:9px;height:9px;background:rgb(198,201,200)"></div><div class="ab" style="left:972px;top:585px;width:9px;height:9px;background:rgb(198,198,197)"></div><div class="ab" style="left:981px;top:585px;width:9px;height:9px;background:rgb(210,209,208)"></div><div class="ab" style="left:1037px;top:570px;width:104px;height:30px;border-radius:9px;background:rgba(255,255,255,.75);filter:blur(2px)"></div><div class="ab" style="left:1044px;top:576px;width:9px;height:9px;background:rgb(232,233,231)"></div><div class="ab" style="left:1053px;top:576px;width:9px;height:9px;background:rgb(220,219,223)"></div><div class="ab" style="left:1062px;top:576px;width:9px;height:9px;background:rgb(236,237,238)"></div><div class="ab" style="left:1071px;top:576px;width:9px;height:9px;background:rgb(232,231,234)"></div><div class="ab" style="left:1080px;top:576px;width:9px;height:9px;background:rgb(226,224,228)"></div><div class="ab" style="left:1089px;top:576px;width:9px;height:9px;background:rgb(212,212,217)"></div><div class="ab" style="left:1098px;top:576px;width:9px;height:9px;background:rgb(232,233,229)"></div><div class="ab" style="left:1107px;top:576px;width:9px;height:9px;background:rgb(232,232,237)"></div><div class="ab" style="left:1116px;top:576px;width:9px;height:9px;background:rgb(236,236,241)"></div><div class="ab" style="left:1125px;top:576px;width:9px;height:9px;background:rgb(212,210,212)"></div><div class="ab" style="left:1044px;top:585px;width:9px;height:9px;background:rgb(190,188,191)"></div><div class="ab" style="left:1053px;top:585px;width:9px;height:9px;background:rgb(204,202,203)"></div><div class="ab" style="left:1062px;top:585px;width:9px;height:9px;background:rgb(204,203,207)"></div><div class="ab" style="left:1071px;top:585px;width:9px;height:9px;background:rgb(224,224,227)"></div><div class="ab" style="left:1080px;top:585px;width:9px;height:9px;background:rgb(198,200,203)"></div><div class="ab" style="left:1089px;top:585px;width:9px;height:9px;background:rgb(216,217,218)"></div><div class="ab" style="left:1098px;top:585px;width:9px;height:9px;background:rgb(190,190,187)"></div><div class="ab" style="left:1107px;top:585px;width:9px;height:9px;background:rgb(224,223,227)"></div><div class="ab" style="left:1116px;top:585px;width:9px;height:9px;background:rgb(190,190,187)"></div><div class="ab" style="left:1125px;top:585px;width:9px;height:9px;background:rgb(224,222,225)"></div><div class="cell" style="left:1146px;top:574px;width:85px">电子商务2103</div><div class="ab" style="left:1235px;top:570px;width:68px;height:30px;border-radius:9px;background:rgba(255,255,255,.75);filter:blur(2px)"></div><div class="ab" style="left:1242px;top:576px;width:9px;height:9px;background:rgb(212,214,212)"></div><div class="ab" style="left:1251px;top:576px;width:9px;height:9px;background:rgb(212,212,210)"></div><div class="ab" style="left:1260px;top:576px;width:9px;height:9px;background:rgb(232,230,234)"></div><div class="ab" style="left:1269px;top:576px;width:9px;height:9px;background:rgb(236,237,237)"></div><div class="ab" style="left:1278px;top:576px;width:9px;height:9px;background:rgb(236,235,233)"></div><div class="ab" style="left:1287px;top:576px;width:9px;height:9px;background:rgb(236,239,236)"></div><div class="ab" style="left:1242px;top:585px;width:9px;height:9px;background:rgb(190,189,191)"></div><div class="ab" style="left:1251px;top:585px;width:9px;height:9px;background:rgb(190,189,190)"></div><div class="ab" style="left:1260px;top:585px;width:9px;height:9px;background:rgb(204,207,205)"></div><div class="ab" style="left:1269px;top:585px;width:9px;height:9px;background:rgb(216,215,217)"></div><div class="ab" style="left:1278px;top:585px;width:9px;height:9px;background:rgb(210,212,209)"></div><div class="ab" style="left:1287px;top:585px;width:9px;height:9px;background:rgb(204,204,201)"></div><div class="ab" style="left:1334px;top:570px;width:68px;height:30px;border-radius:9px;background:rgba(255,255,255,.75);filter:blur(2px)"></div><div class="ab" style="left:1341px;top:576px;width:9px;height:9px;background:rgb(226,224,223)"></div><div class="ab" style="left:1350px;top:576px;width:9px;height:9px;background:rgb(212,215,217)"></div><div class="ab" style="left:1359px;top:576px;width:9px;height:9px;background:rgb(236,235,241)"></div><div class="ab" style="left:1368px;top:576px;width:9px;height:9px;background:rgb(232,231,236)"></div><div class="ab" style="left:1377px;top:576px;width:9px;height:9px;background:rgb(212,215,215)"></div><div class="ab" style="left:1386px;top:576px;width:9px;height:9px;background:rgb(232,234,235)"></div><div class="ab" style="left:1341px;top:585px;width:9px;height:9px;background:rgb(216,216,216)"></div><div class="ab" style="left:1350px;top:585px;width:9px;height:9px;background:rgb(198,198,198)"></div><div class="ab" style="left:1359px;top:585px;width:9px;height:9px;background:rgb(224,227,223)"></div><div class="ab" style="left:1368px;top:585px;width:9px;height:9px;background:rgb(210,210,207)"></div><div class="ab" style="left:1377px;top:585px;width:9px;height:9px;background:rgb(198,196,196)"></div><div class="ab" style="left:1386px;top:585px;width:9px;height:9px;background:rgb(224,227,225)"></div><div class="cell" style="left:1449px;top:574px;width:85px">电子商务</div><div class="cell" style="left:1535px;top:574px;width:100px;text-align:center">统一安排</div><div class="cb" style="left:450px;top:616px"><svg style="position:absolute;left:3px;top:4px" width="12" height="10" viewBox="0 0 12 10"><path d="M.6 4.4L4.4 7.8L11.6 1.1" fill="none" stroke="#fff" stroke-width="1.1"/></svg></div><div class="cell" style="left:484px;top:613px;width:40px;text-align:center">4</div><div class="cell" style="left:540px;top:613px;width:85px">21级-学生岗位实习报备</div><div class="cell" style="left:626px;top:613px;width:100px;text-align:center">2024</div><div class="cell" style="left:727px;top:613px;width:100px;text-align:center">已过审</div><div class="cell" style="left:828px;top:613px;width:100px;text-align:center">在岗</div><div class="ab" style="left:938px;top:606px;width:59px;height:30px;border-radius:9px;background:rgba(255,255,255,.75);filter:blur(2px)"></div><div class="ab" style="left:945px;top:612px;width:9px;height:9px;background:rgb(232,231,229)"></div><div class="ab" style="left:954px;top:612px;width:9px;height:9px;background:rgb(212,215,215)"></div><div class="ab" style="left:963px;top:612px;width:9px;height:9px;background:rgb(236,239,237)"></div><div class="ab" style="left:972px;top:612px;width:9px;height:9px;background:rgb(236,235,237)"></div><div class="ab" style="left:981px;top:612px;width:9px;height:9px;background:rgb(212,213,211)"></div><div class="ab" style="left:945px;top:621px;width:9px;height:9px;background:rgb(198,198,202)"></div><div class="ab" style="left:954px;top:621px;width:9px;height:9px;background:rgb(190,190,192)"></div><div class="ab" style="left:963px;top:621px;width:9px;height:9px;background:rgb(204,206,206)"></div><div class="ab" style="left:972px;top:621px;width:9px;height:9px;background:rgb(198,196,199)"></div><div class="ab" style="left:981px;top:621px;width:9px;height:9px;background:rgb(198,198,197)"></div><div class="ab" style="left:1037px;top:606px;width:104px;height:30px;border-radius:9px;background:rgba(255,255,255,.75);filter:blur(2px)"></div><div class="ab" style="left:1044px;top:612px;width:9px;height:9px;background:rgb(212,212,215)"></div><div class="ab" style="left:1053px;top:612px;width:9px;height:9px;background:rgb(212,213,213)"></div><div class="ab" style="left:1062px;top:612px;width:9px;height:9px;background:rgb(236,239,236)"></div><div class="ab" style="left:1071px;top:612px;width:9px;height:9px;background:rgb(220,222,217)"></div><div class="ab" style="left:1080px;top:612px;width:9px;height:9px;background:rgb(212,212,210)"></div><div class="ab" style="left:1089px;top:612px;width:9px;height:9px;background:rgb(220,221,217)"></div><div class="ab" style="left:1098px;top:612px;width:9px;height:9px;background:rgb(232,230,233)"></div><div class="ab" style="left:1107px;top:612px;width:9px;height:9px;background:rgb(226,229,226)"></div><div class="ab" style="left:1116px;top:612px;width:9px;height:9px;background:rgb(212,214,217)"></div><div class="ab" style="left:1125px;top:612px;width:9px;height:9px;background:rgb(220,223,223)"></div><div class="ab" style="left:1044px;top:621px;width:9px;height:9px;background:rgb(204,207,208)"></div><div class="ab" style="left:1053px;top:621px;width:9px;height:9px;background:rgb(198,198,197)"></div><div class="ab" style="left:1062px;top:621px;width:9px;height:9px;background:rgb(190,193,195)"></div><div class="ab" style="left:1071px;top:621px;width:9px;height:9px;background:rgb(224,225,229)"></div><div class="ab" style="left:1080px;top:621px;width:9px;height:9px;background:rgb(198,200,203)"></div><div class="ab" style="left:1089px;top:621px;width:9px;height:9px;background:rgb(216,214,216)"></div><div class="ab" style="left:1098px;top:621px;width:9px;height:9px;background:rgb(190,188,187)"></div><div class="ab" style="left:1107px;top:621px;width:9px;height:9px;background:rgb(198,201,200)"></div><div class="ab" style="left:1116px;top:621px;width:9px;height:9px;background:rgb(190,191,194)"></div><div class="ab" style="left:1125px;top:621px;width:9px;height:9px;background:rgb(216,214,213)"></div><div class="cell" style="left:1146px;top:613px;width:85px">电子商务2103</div><div class="ab" style="left:1235px;top:606px;width:68px;height:30px;border-radius:9px;background:rgba(255,255,255,.75);filter:blur(2px)"></div><div class="ab" style="left:1242px;top:612px;width:9px;height:9px;background:rgb(236,239,236)"></div><div class="ab" style="left:1251px;top:612px;width:9px;height:9px;background:rgb(232,232,229)"></div><div class="ab" style="left:1260px;top:612px;width:9px;height:9px;background:rgb(232,230,237)"></div><div class="ab" style="left:1269px;top:612px;width:9px;height:9px;background:rgb(236,234,241)"></div><div class="ab" style="left:1278px;top:612px;width:9px;height:9px;background:rgb(212,215,216)"></div><div class="ab" style="left:1287px;top:612px;width:9px;height:9px;background:rgb(226,224,227)"></div><div class="ab" style="left:1242px;top:621px;width:9px;height:9px;background:rgb(198,201,198)"></div><div class="ab" style="left:1251px;top:621px;width:9px;height:9px;background:rgb(198,201,202)"></div><div class="ab" style="left:1260px;top:621px;width:9px;height:9px;background:rgb(210,211,208)"></div><div class="ab" style="left:1269px;top:621px;width:9px;height:9px;background:rgb(210,213,211)"></div><div class="ab" style="left:1278px;top:621px;width:9px;height:9px;background:rgb(190,192,190)"></div><div class="ab" style="left:1287px;top:621px;width:9px;height:9px;background:rgb(190,192,189)"></div><div class="ab" style="left:1334px;top:606px;width:68px;height:30px;border-radius:9px;background:rgba(255,255,255,.75);filter:blur(2px)"></div><div class="ab" style="left:1341px;top:612px;width:9px;height:9px;background:rgb(226,226,227)"></div><div class="ab" style="left:1350px;top:612px;width:9px;height:9px;background:rgb(236,238,235)"></div><div class="ab" style="left:1359px;top:612px;width:9px;height:9px;background:rgb(212,213,209)"></div><div class="ab" style="left:1368px;top:612px;width:9px;height:9px;background:rgb(232,232,230)"></div><div class="ab" style="left:1377px;top:612px;width:9px;height:9px;background:rgb(220,223,224)"></div><div class="ab" style="left:1386px;top:612px;width:9px;height:9px;background:rgb(226,229,231)"></div><div class="ab" style="left:1341px;top:621px;width:9px;height:9px;background:rgb(204,205,208)"></div><div class="ab" style="left:1350px;top:621px;width:9px;height:9px;background:rgb(210,208,215)"></div><div class="ab" style="left:1359px;top:621px;width:9px;height:9px;background:rgb(198,198,196)"></div><div class="ab" style="left:1368px;top:621px;width:9px;height:9px;background:rgb(210,208,211)"></div><div class="ab" style="left:1377px;top:621px;width:9px;height:9px;background:rgb(210,208,215)"></div><div class="ab" style="left:1386px;top:621px;width:9px;height:9px;background:rgb(210,210,213)"></div><div class="cell" style="left:1449px;top:613px;width:85px">电子商务</div><div class="cell" style="left:1535px;top:613px;width:100px;text-align:center">统一安排</div><div class="cb" style="left:450px;top:655px"><svg style="position:absolute;left:3px;top:4px" width="12" height="10" viewBox="0 0 12 10"><path d="M.6 4.4L4.4 7.8L11.6 1.1" fill="none" stroke="#fff" stroke-width="1.1"/></svg></div><div class="cell" style="left:484px;top:652px;width:40px;text-align:center">5</div><div class="cell" style="left:540px;top:652px;width:85px">21级-学生岗位实习报备</div><div class="cell" style="left:626px;top:652px;width:100px;text-align:center">2024</div><div class="cell" style="left:727px;top:652px;width:100px;text-align:center">已过审</div><div class="cell" style="left:828px;top:652px;width:100px;text-align:center">在岗</div><div class="ab" style="left:938px;top:642px;width:59px;height:39px;border-radius:9px;background:rgba(255,255,255,.75);filter:blur(2px)"></div><div class="ab" style="left:945px;top:648px;width:9px;height:9px;background:rgb(234,233,232)"></div><div class="ab" style="left:954px;top:648px;width:9px;height:9px;background:rgb(245,243,244)"></div><div class="ab" style="left:963px;top:648px;width:9px;height:9px;background:rgb(245,245,247)"></div><div class="ab" style="left:972px;top:648px;width:9px;height:9px;background:rgb(234,236,239)"></div><div class="ab" style="left:981px;top:648px;width:9px;height:9px;background:rgb(238,236,240)"></div><div class="ab" style="left:945px;top:657px;width:9px;height:9px;background:rgb(180,181,184)"></div><div class="ab" style="left:954px;top:657px;width:9px;height:9px;background:rgb(200,198,199)"></div><div class="ab" style="left:963px;top:657px;width:9px;height:9px;background:rgb(168,169,172)"></div><div class="ab" style="left:972px;top:657px;width:9px;height:9px;background:rgb(200,200,199)"></div><div class="ab" style="left:981px;top:657px;width:9px;height:9px;background:rgb(200,200,203)"></div><div class="ab" style="left:945px;top:666px;width:9px;height:9px;background:rgb(238,236,240)"></div><div class="ab" style="left:954px;top:666px;width:9px;height:9px;background:rgb(228,228,230)"></div><div class="ab" style="left:963px;top:666px;width:9px;height:9px;background:rgb(242,240,242)"></div><div class="ab" style="left:972px;top:666px;width:9px;height:9px;background:rgb(228,231,229)"></div><div class="ab" style="left:981px;top:666px;width:9px;height:9px;background:rgb(238,238,236)"></div><div class="ab" style="left:1037px;top:642px;width:104px;height:39px;border-radius:9px;background:rgba(255,255,255,.75);filter:blur(2px)"></div><div class="ab" style="left:1044px;top:648px;width:9px;height:9px;background:rgb(242,243,240)"></div><div class="ab" style="left:1053px;top:648px;width:9px;height:9px;background:rgb(238,239,239)"></div><div class="ab" style="left:1062px;top:648px;width:9px;height:9px;background:rgb(228,228,226)"></div><div class="ab" style="left:1071px;top:648px;width:9px;height:9px;background:rgb(228,231,229)"></div><div class="ab" style="left:1080px;top:648px;width:9px;height:9px;background:rgb(234,233,235)"></div><div class="ab" style="left:1089px;top:648px;width:9px;height:9px;background:rgb(242,244,244)"></div><div class="ab" style="left:1098px;top:648px;width:9px;height:9px;background:rgb(234,234,237)"></div><div class="ab" style="left:1107px;top:648px;width:9px;height:9px;background:rgb(228,231,231)"></div><div class="ab" style="left:1116px;top:648px;width:9px;height:9px;background:rgb(245,247,245)"></div><div class="ab" style="left:1125px;top:648px;width:9px;height:9px;background:rgb(228,226,231)"></div><div class="ab" style="left:1044px;top:657px;width:9px;height:9px;background:rgb(200,202,199)"></div><div class="ab" style="left:1053px;top:657px;width:9px;height:9px;background:rgb(214,214,218)"></div><div class="ab" style="left:1062px;top:657px;width:9px;height:9px;background:rgb(168,170,167)"></div><div class="ab" style="left:1071px;top:657px;width:9px;height:9px;background:rgb(180,181,183)"></div><div class="ab" style="left:1080px;top:657px;width:9px;height:9px;background:rgb(192,192,193)"></div><div class="ab" style="left:1089px;top:657px;width:9px;height:9px;background:rgb(192,195,193)"></div><div class="ab" style="left:1098px;top:657px;width:9px;height:9px;background:rgb(200,203,200)"></div><div class="ab" style="left:1107px;top:657px;width:9px;height:9px;background:rgb(192,193,197)"></div><div class="ab" style="left:1116px;top:657px;width:9px;height:9px;background:rgb(214,215,212)"></div><div class="ab" style="left:1125px;top:657px;width:9px;height:9px;background:rgb(180,183,179)"></div><div class="ab" style="left:1044px;top:666px;width:9px;height:9px;background:rgb(228,227,233)"></div><div class="ab" style="left:1053px;top:666px;width:9px;height:9px;background:rgb(242,244,242)"></div><div class="ab" style="left:1062px;top:666px;width:9px;height:9px;background:rgb(242,242,246)"></div><div class="ab" style="left:1071px;top:666px;width:9px;height:9px;background:rgb(242,241,247)"></div><div class="ab" style="left:1080px;top:666px;width:9px;height:9px;background:rgb(234,233,232)"></div><div class="ab" style="left:1089px;top:666px;width:9px;height:9px;background:rgb(234,234,239)"></div><div class="ab" style="left:1098px;top:666px;width:9px;height:9px;background:rgb(228,228,228)"></div><div class="ab" style="left:1107px;top:666px;width:9px;height:9px;background:rgb(238,238,238)"></div><div class="ab" style="left:1116px;top:666px;width:9px;height:9px;background:rgb(228,231,231)"></div><div class="ab" style="left:1125px;top:666px;width:9px;height:9px;background:rgb(242,243,247)"></div><div class="cell" style="left:1146px;top:652px;width:85px">电子商务2103</div><div class="ab" style="left:1235px;top:642px;width:68px;height:39px;border-radius:9px;background:rgba(255,255,255,.75);filter:blur(2px)"></div><div class="ab" style="left:1242px;top:648px;width:9px;height:9px;background:rgb(234,235,235)"></div><div class="ab" style="left:1251px;top:648px;width:9px;height:9px;background:rgb(238,236,242)"></div><div class="ab" style="left:1260px;top:648px;width:9px;height:9px;background:rgb(238,240,240)"></div><div class="ab" style="left:1269px;top:648px;width:9px;height:9px;background:rgb(234,237,239)"></div><div class="ab" style="left:1278px;top:648px;width:9px;height:9px;background:rgb(245,248,245)"></div><div class="ab" style="left:1287px;top:648px;width:9px;height:9px;background:rgb(228,228,228)"></div><div class="ab" style="left:1242px;top:657px;width:9px;height:9px;background:rgb(200,201,204)"></div><div class="ab" style="left:1251px;top:657px;width:9px;height:9px;background:rgb(200,200,197)"></div><div class="ab" style="left:1260px;top:657px;width:9px;height:9px;background:rgb(180,178,183)"></div><div class="ab" style="left:1269px;top:657px;width:9px;height:9px;background:rgb(214,215,218)"></div><div class="ab" style="left:1278px;top:657px;width:9px;height:9px;background:rgb(168,166,171)"></div><div class="ab" style="left:1287px;top:657px;width:9px;height:9px;background:rgb(206,207,210)"></div><div class="ab" style="left:1242px;top:666px;width:9px;height:9px;background:rgb(234,232,234)"></div><div class="ab" style="left:1251px;top:666px;width:9px;height:9px;background:rgb(234,233,239)"></div><div class="ab" style="left:1260px;top:666px;width:9px;height:9px;background:rgb(228,231,232)"></div><div class="ab" style="left:1269px;top:666px;width:9px;height:9px;background:rgb(228,230,225)"></div><div class="ab" style="left:1278px;top:666px;width:9px;height:9px;background:rgb(228,227,228)"></div><div class="ab" style="left:1287px;top:666px;width:9px;height:9px;background:rgb(245,243,246)"></div><div class="ab" style="left:1334px;top:642px;width:68px;height:39px;border-radius:9px;background:rgba(255,255,255,.75);filter:blur(2px)"></div><div class="ab" style="left:1341px;top:648px;width:9px;height:9px;background:rgb(234,237,235)"></div><div class="ab" style="left:1350px;top:648px;width:9px;height:9px;background:rgb(245,248,248)"></div><div class="ab" style="left:1359px;top:648px;width:9px;height:9px;background:rgb(228,226,226)"></div><div class="ab" style="left:1368px;top:648px;width:9px;height:9px;background:rgb(238,240,238)"></div><div class="ab" style="left:1377px;top:648px;width:9px;height:9px;background:rgb(242,242,242)"></div><div class="ab" style="left:1386px;top:648px;width:9px;height:9px;background:rgb(245,243,242)"></div><div class="ab" style="left:1341px;top:657px;width:9px;height:9px;background:rgb(206,206,210)"></div><div class="ab" style="left:1350px;top:657px;width:9px;height:9px;background:rgb(192,192,192)"></div><div class="ab" style="left:1359px;top:657px;width:9px;height:9px;background:rgb(200,202,200)"></div><div class="ab" style="left:1368px;top:657px;width:9px;height:9px;background:rgb(206,205,203)"></div><div class="ab" style="left:1377px;top:657px;width:9px;height:9px;background:rgb(200,203,201)"></div><div class="ab" style="left:1386px;top:657px;width:9px;height:9px;background:rgb(168,166,168)"></div><div class="ab" style="left:1341px;top:666px;width:9px;height:9px;background:rgb(242,245,245)"></div><div class="ab" style="left:1350px;top:666px;width:9px;height:9px;background:rgb(228,228,228)"></div><div class="ab" style="left:1359px;top:666px;width:9px;height:9px;background:rgb(242,242,242)"></div><div class="ab" style="left:1368px;top:666px;width:9px;height:9px;background:rgb(242,240,244)"></div><div class="ab" style="left:1377px;top:666px;width:9px;height:9px;background:rgb(242,242,245)"></div><div class="ab" style="left:1386px;top:666px;width:9px;height:9px;background:rgb(234,232,235)"></div><div class="cell" style="left:1449px;top:652px;width:85px">电子商务</div><div class="cell" style="left:1535px;top:652px;width:100px;text-align:center">统一安排</div><div class="cb" style="left:450px;top:694px"><svg style="position:absolute;left:3px;top:4px" width="12" height="10" viewBox="0 0 12 10"><path d="M.6 4.4L4.4 7.8L11.6 1.1" fill="none" stroke="#fff" stroke-width="1.1"/></svg></div><div class="cell" style="left:484px;top:691px;width:40px;text-align:center">6</div><div class="cell" style="left:540px;top:691px;width:85px">21级-学生岗位实习报备</div><div class="cell" style="left:626px;top:691px;width:100px;text-align:center">2024</div><div class="cell" style="left:727px;top:691px;width:100px;text-align:center">已过审</div><div class="cell" style="left:828px;top:691px;width:100px;text-align:center">在岗</div><div class="ab" style="left:938px;top:687px;width:59px;height:30px;border-radius:9px;background:rgba(255,255,255,.75);filter:blur(2px)"></div><div class="ab" style="left:945px;top:693px;width:9px;height:9px;background:rgb(236,234,236)"></div><div class="ab" style="left:954px;top:693px;width:9px;height:9px;background:rgb(232,231,233)"></div><div class="ab" style="left:963px;top:693px;width:9px;height:9px;background:rgb(220,219,224)"></div><div class="ab" style="left:972px;top:693px;width:9px;height:9px;background:rgb(220,220,221)"></div><div class="ab" style="left:981px;top:693px;width:9px;height:9px;background:rgb(212,214,216)"></div><div class="ab" style="left:945px;top:702px;width:9px;height:9px;background:rgb(216,215,216)"></div><div class="ab" style="left:954px;top:702px;width:9px;height:9px;background:rgb(210,211,207)"></div><div class="ab" style="left:963px;top:702px;width:9px;height:9px;background:rgb(216,215,219)"></div><div class="ab" style="left:972px;top:702px;width:9px;height:9px;background:rgb(190,189,187)"></div><div class="ab" style="left:981px;top:702px;width:9px;height:9px;background:rgb(216,215,219)"></div><div class="ab" style="left:1037px;top:687px;width:104px;height:30px;border-radius:9px;background:rgba(255,255,255,.75);filter:blur(2px)"></div><div class="ab" style="left:1044px;top:693px;width:9px;height:9px;background:rgb(212,215,209)"></div><div class="ab" style="left:1053px;top:693px;width:9px;height:9px;background:rgb(220,221,224)"></div><div class="ab" style="left:1062px;top:693px;width:9px;height:9px;background:rgb(226,229,224)"></div><div class="ab" style="left:1071px;top:693px;width:9px;height:9px;background:rgb(212,211,214)"></div><div class="ab" style="left:1080px;top:693px;width:9px;height:9px;background:rgb(220,219,225)"></div><div class="ab" style="left:1089px;top:693px;width:9px;height:9px;background:rgb(232,230,233)"></div><div class="ab" style="left:1098px;top:693px;width:9px;height:9px;background:rgb(232,232,234)"></div><div class="ab" style="left:1107px;top:693px;width:9px;height:9px;background:rgb(232,231,230)"></div><div class="ab" style="left:1116px;top:693px;width:9px;height:9px;background:rgb(212,210,213)"></div><div class="ab" style="left:1125px;top:693px;width:9px;height:9px;background:rgb(212,212,215)"></div><div class="ab" style="left:1044px;top:702px;width:9px;height:9px;background:rgb(190,192,190)"></div><div class="ab" style="left:1053px;top:702px;width:9px;height:9px;background:rgb(210,210,211)"></div><div class="ab" style="left:1062px;top:702px;width:9px;height:9px;background:rgb(210,208,207)"></div><div class="ab" style="left:1071px;top:702px;width:9px;height:9px;background:rgb(224,225,224)"></div><div class="ab" style="left:1080px;top:702px;width:9px;height:9px;background:rgb(204,206,208)"></div><div class="ab" style="left:1089px;top:702px;width:9px;height:9px;background:rgb(198,198,200)"></div><div class="ab" style="left:1098px;top:702px;width:9px;height:9px;background:rgb(224,225,221)"></div><div class="ab" style="left:1107px;top:702px;width:9px;height:9px;background:rgb(224,225,224)"></div><div class="ab" style="left:1116px;top:702px;width:9px;height:9px;background:rgb(224,225,221)"></div><div class="ab" style="left:1125px;top:702px;width:9px;height:9px;background:rgb(210,208,214)"></div><div class="cell" style="left:1146px;top:691px;width:85px">电子商务2103</div><div class="ab" style="left:1235px;top:687px;width:68px;height:30px;border-radius:9px;background:rgba(255,255,255,.75);filter:blur(2px)"></div><div class="ab" style="left:1242px;top:693px;width:9px;height:9px;background:rgb(212,210,213)"></div><div class="ab" style="left:1251px;top:693px;width:9px;height:9px;background:rgb(220,223,218)"></div><div class="ab" style="left:1260px;top:693px;width:9px;height:9px;background:rgb(236,236,238)"></div><div class="ab" style="left:1269px;top:693px;width:9px;height:9px;background:rgb(226,226,223)"></div><div class="ab" style="left:1278px;top:693px;width:9px;height:9px;background:rgb(226,229,228)"></div><div class="ab" style="left:1287px;top:693px;width:9px;height:9px;background:rgb(226,226,223)"></div><div class="ab" style="left:1242px;top:702px;width:9px;height:9px;background:rgb(224,226,222)"></div><div class="ab" style="left:1251px;top:702px;width:9px;height:9px;background:rgb(190,189,188)"></div><div class="ab" style="left:1260px;top:702px;width:9px;height:9px;background:rgb(210,213,214)"></div><div class="ab" style="left:1269px;top:702px;width:9px;height:9px;background:rgb(210,210,213)"></div><div class="ab" style="left:1278px;top:702px;width:9px;height:9px;background:rgb(210,209,214)"></div><div class="ab" style="left:1287px;top:702px;width:9px;height:9px;background:rgb(198,196,199)"></div><div class="ab" style="left:1334px;top:687px;width:68px;height:30px;border-radius:9px;background:rgba(255,255,255,.75);filter:blur(2px)"></div><div class="ab" style="left:1341px;top:693px;width:9px;height:9px;background:rgb(220,222,220)"></div><div class="ab" style="left:1350px;top:693px;width:9px;height:9px;background:rgb(226,226,230)"></div><div class="ab" style="left:1359px;top:693px;width:9px;height:9px;background:rgb(226,228,224)"></div><div class="ab" style="left:1368px;top:693px;width:9px;height:9px;background:rgb(236,235,239)"></div><div class="ab" style="left:1377px;top:693px;width:9px;height:9px;background:rgb(220,219,223)"></div><div class="ab" style="left:1386px;top:693px;width:9px;height:9px;background:rgb(212,215,209)"></div><div class="ab" style="left:1341px;top:702px;width:9px;height:9px;background:rgb(210,212,215)"></div><div class="ab" style="left:1350px;top:702px;width:9px;height:9px;background:rgb(204,203,207)"></div><div class="ab" style="left:1359px;top:702px;width:9px;height:9px;background:rgb(190,188,191)"></div><div class="ab" style="left:1368px;top:702px;width:9px;height:9px;background:rgb(216,214,216)"></div><div class="ab" style="left:1377px;top:702px;width:9px;height:9px;background:rgb(190,191,194)"></div><div class="ab" style="left:1386px;top:702px;width:9px;height:9px;background:rgb(224,225,223)"></div><div class="cell" style="left:1449px;top:691px;width:85px">电子商务</div><div class="cell" style="left:1535px;top:691px;width:100px;text-align:center">统一安排</div><div class="cb" style="left:450px;top:733px"><svg style="position:absolute;left:3px;top:4px" width="12" height="10" viewBox="0 0 12 10"><path d="M.6 4.4L4.4 7.8L11.6 1.1" fill="none" stroke="#fff" stroke-width="1.1"/></svg></div><div class="cell" style="left:484px;top:730px;width:40px;text-align:center">7</div><div class="cell" style="left:540px;top:730px;width:85px">21级-学生岗位实习报备</div><div class="cell" style="left:626px;top:730px;width:100px;text-align:center">2024</div><div class="cell" style="left:727px;top:730px;width:100px;text-align:center">已过审</div><div class="cell" style="left:828px;top:730px;width:100px;text-align:center">在岗</div><div class="ab" style="left:938px;top:723px;width:59px;height:30px;border-radius:9px;background:rgba(255,255,255,.75);filter:blur(2px)"></div><div class="ab" style="left:945px;top:729px;width:9px;height:9px;background:rgb(220,219,223)"></div><div class="ab" style="left:954px;top:729px;width:9px;height:9px;background:rgb(232,234,232)"></div><div class="ab" style="left:963px;top:729px;width:9px;height:9px;background:rgb(236,239,234)"></div><div class="ab" style="left:972px;top:729px;width:9px;height:9px;background:rgb(226,226,227)"></div><div class="ab" style="left:981px;top:729px;width:9px;height:9px;background:rgb(236,236,238)"></div><div class="ab" style="left:945px;top:738px;width:9px;height:9px;background:rgb(204,207,205)"></div><div class="ab" style="left:954px;top:738px;width:9px;height:9px;background:rgb(198,199,198)"></div><div class="ab" style="left:963px;top:738px;width:9px;height:9px;background:rgb(198,197,198)"></div><div class="ab" style="left:972px;top:738px;width:9px;height:9px;background:rgb(198,198,198)"></div><div class="ab" style="left:981px;top:738px;width:9px;height:9px;background:rgb(204,202,207)"></div><div class="ab" style="left:1037px;top:723px;width:104px;height:30px;border-radius:9px;background:rgba(255,255,255,.75);filter:blur(2px)"></div><div class="ab" style="left:1044px;top:729px;width:9px;height:9px;background:rgb(226,225,231)"></div><div class="ab" style="left:1053px;top:729px;width:9px;height:9px;background:rgb(236,235,234)"></div><div class="ab" style="left:1062px;top:729px;width:9px;height:9px;background:rgb(232,230,230)"></div><div class="ab" style="left:1071px;top:729px;width:9px;height:9px;background:rgb(212,213,212)"></div><div class="ab" style="left:1080px;top:729px;width:9px;height:9px;background:rgb(232,232,229)"></div><div class="ab" style="left:1089px;top:729px;width:9px;height:9px;background:rgb(226,225,224)"></div><div class="ab" style="left:1098px;top:729px;width:9px;height:9px;background:rgb(212,211,212)"></div><div class="ab" style="left:1107px;top:729px;width:9px;height:9px;background:rgb(212,212,217)"></div><div class="ab" style="left:1116px;top:729px;width:9px;height:9px;background:rgb(220,221,221)"></div><div class="ab" style="left:1125px;top:729px;width:9px;height:9px;background:rgb(212,210,214)"></div><div class="ab" style="left:1044px;top:738px;width:9px;height:9px;background:rgb(198,196,200)"></div><div class="ab" style="left:1053px;top:738px;width:9px;height:9px;background:rgb(204,203,201)"></div><div class="ab" style="left:1062px;top:738px;width:9px;height:9px;background:rgb(198,198,195)"></div><div class="ab" style="left:1071px;top:738px;width:9px;height:9px;background:rgb(216,219,216)"></div><div class="ab" style="left:1080px;top:738px;width:9px;height:9px;background:rgb(190,190,193)"></div><div class="ab" style="left:1089px;top:738px;width:9px;height:9px;background:rgb(224,224,223)"></div><div class="ab" style="left:1098px;top:738px;width:9px;height:9px;background:rgb(216,216,214)"></div><div class="ab" style="left:1107px;top:738px;width:9px;height:9px;background:rgb(198,196,202)"></div><div class="ab" style="left:1116px;top:738px;width:9px;height:9px;background:rgb(216,217,214)"></div><div class="ab" style="left:1125px;top:738px;width:9px;height:9px;background:rgb(210,208,213)"></div><div class="cell" style="left:1146px;top:730px;width:85px">电子商务2103</div><div class="ab" style="left:1235px;top:723px;width:68px;height:30px;border-radius:9px;background:rgba(255,255,255,.75);filter:blur(2px)"></div><div class="ab" style="left:1242px;top:729px;width:9px;height:9px;background:rgb(236,235,241)"></div><div class="ab" style="left:1251px;top:729px;width:9px;height:9px;background:rgb(212,215,211)"></div><div class="ab" style="left:1260px;top:729px;width:9px;height:9px;background:rgb(232,235,233)"></div><div class="ab" style="left:1269px;top:729px;width:9px;height:9px;background:rgb(232,232,233)"></div><div class="ab" style="left:1278px;top:729px;width:9px;height:9px;background:rgb(232,230,233)"></div><div class="ab" style="left:1287px;top:729px;width:9px;height:9px;background:rgb(236,236,239)"></div><div class="ab" style="left:1242px;top:738px;width:9px;height:9px;background:rgb(210,208,212)"></div><div class="ab" style="left:1251px;top:738px;width:9px;height:9px;background:rgb(224,223,227)"></div><div class="ab" style="left:1260px;top:738px;width:9px;height:9px;background:rgb(224,225,224)"></div><div class="ab" style="left:1269px;top:738px;width:9px;height:9px;background:rgb(190,191,189)"></div><div class="ab" style="left:1278px;top:738px;width:9px;height:9px;background:rgb(210,208,208)"></div><div class="ab" style="left:1287px;top:738px;width:9px;height:9px;background:rgb(210,212,212)"></div><div class="ab" style="left:1334px;top:723px;width:68px;height:30px;border-radius:9px;background:rgba(255,255,255,.75);filter:blur(2px)"></div><div class="ab" style="left:1341px;top:729px;width:9px;height:9px;background:rgb(232,231,231)"></div><div class="ab" style="left:1350px;top:729px;width:9px;height:9px;background:rgb(212,210,217)"></div><div class="ab" style="left:1359px;top:729px;width:9px;height:9px;background:rgb(220,223,223)"></div><div class="ab" style="left:1368px;top:729px;width:9px;height:9px;background:rgb(212,214,214)"></div><div class="ab" style="left:1377px;top:729px;width:9px;height:9px;background:rgb(236,235,235)"></div><div class="ab" style="left:1386px;top:729px;width:9px;height:9px;background:rgb(226,226,225)"></div><div class="ab" style="left:1341px;top:738px;width:9px;height:9px;background:rgb(216,215,214)"></div><div class="ab" style="left:1350px;top:738px;width:9px;height:9px;background:rgb(190,191,194)"></div><div class="ab" style="left:1359px;top:738px;width:9px;height:9px;background:rgb(198,198,197)"></div><div class="ab" style="left:1368px;top:738px;width:9px;height:9px;background:rgb(190,191,192)"></div><div class="ab" style="left:1377px;top:738px;width:9px;height:9px;background:rgb(190,192,193)"></div><div class="ab" style="left:1386px;top:738px;width:9px;height:9px;background:rgb(190,193,189)"></div><div class="cell" style="left:1449px;top:730px;width:85px">电子商务</div><div class="cell" style="left:1535px;top:730px;width:100px;text-align:center">统一安排</div><div class="cb" style="left:450px;top:772px"><svg style="position:absolute;left:3px;top:4px" width="12" height="10" viewBox="0 0 12 10"><path d="M.6 4.4L4.4 7.8L11.6 1.1" fill="none" stroke="#fff" stroke-width="1.1"/></svg></div><div class="cell" style="left:484px;top:769px;width:40px;text-align:center">8</div><div class="cell" style="left:540px;top:769px;width:85px">21级-学生岗位实习报备</div><div class="cell" style="left:626px;top:769px;width:100px;text-align:center">2024</div><div class="cell" style="left:727px;top:769px;width:100px;text-align:center">已过审</div><div class="cell" style="left:828px;top:769px;width:100px;text-align:center">在岗</div><div class="ab" style="left:938px;top:759px;width:59px;height:39px;border-radius:9px;background:rgba(255,255,255,.75);filter:blur(2px)"></div><div class="ab" style="left:945px;top:765px;width:9px;height:9px;background:rgb(234,236,237)"></div><div class="ab" style="left:954px;top:765px;width:9px;height:9px;background:rgb(245,244,249)"></div><div class="ab" style="left:963px;top:765px;width:9px;height:9px;background:rgb(234,236,234)"></div><div class="ab" style="left:972px;top:765px;width:9px;height:9px;background:rgb(228,229,233)"></div><div class="ab" style="left:981px;top:765px;width:9px;height:9px;background:rgb(234,235,236)"></div><div class="ab" style="left:945px;top:774px;width:9px;height:9px;background:rgb(168,167,168)"></div><div class="ab" style="left:954px;top:774px;width:9px;height:9px;background:rgb(214,213,211)"></div><div class="ab" style="left:963px;top:774px;width:9px;height:9px;background:rgb(206,209,203)"></div><div class="ab" style="left:972px;top:774px;width:9px;height:9px;background:rgb(214,214,212)"></div><div class="ab" style="left:981px;top:774px;width:9px;height:9px;background:rgb(200,202,204)"></div><div class="ab" style="left:945px;top:783px;width:9px;height:9px;background:rgb(245,248,246)"></div><div class="ab" style="left:954px;top:783px;width:9px;height:9px;background:rgb(242,242,242)"></div><div class="ab" style="left:963px;top:783px;width:9px;height:9px;background:rgb(242,243,244)"></div><div class="ab" style="left:972px;top:783px;width:9px;height:9px;background:rgb(242,244,246)"></div><div class="ab" style="left:981px;top:783px;width:9px;height:9px;background:rgb(234,232,231)"></div><div class="ab" style="left:1037px;top:759px;width:104px;height:39px;border-radius:9px;background:rgba(255,255,255,.75);filter:blur(2px)"></div><div class="ab" style="left:1044px;top:765px;width:9px;height:9px;background:rgb(245,246,249)"></div><div class="ab" style="left:1053px;top:765px;width:9px;height:9px;background:rgb(234,235,238)"></div><div class="ab" style="left:1062px;top:765px;width:9px;height:9px;background:rgb(234,235,237)"></div><div class="ab" style="left:1071px;top:765px;width:9px;height:9px;background:rgb(228,226,227)"></div><div class="ab" style="left:1080px;top:765px;width:9px;height:9px;background:rgb(238,239,240)"></div><div class="ab" style="left:1089px;top:765px;width:9px;height:9px;background:rgb(228,229,233)"></div><div class="ab" style="left:1098px;top:765px;width:9px;height:9px;background:rgb(245,248,242)"></div><div class="ab" style="left:1107px;top:765px;width:9px;height:9px;background:rgb(228,231,227)"></div><div class="ab" style="left:1116px;top:765px;width:9px;height:9px;background:rgb(228,231,230)"></div><div class="ab" style="left:1125px;top:765px;width:9px;height:9px;background:rgb(245,243,242)"></div><div class="ab" style="left:1044px;top:774px;width:9px;height:9px;background:rgb(206,207,205)"></div><div class="ab" style="left:1053px;top:774px;width:9px;height:9px;background:rgb(168,166,166)"></div><div class="ab" style="left:1062px;top:774px;width:9px;height:9px;background:rgb(180,179,184)"></div><div class="ab" style="left:1071px;top:774px;width:9px;height:9px;background:rgb(192,191,192)"></div><div class="ab" style="left:1080px;top:774px;width:9px;height:9px;background:rgb(168,168,169)"></div><div class="ab" style="left:1089px;top:774px;width:9px;height:9px;background:rgb(180,180,181)"></div><div class="ab" style="left:1098px;top:774px;width:9px;height:9px;background:rgb(200,199,201)"></div><div class="ab" style="left:1107px;top:774px;width:9px;height:9px;background:rgb(206,207,206)"></div><div class="ab" style="left:1116px;top:774px;width:9px;height:9px;background:rgb(206,206,211)"></div><div class="ab" style="left:1125px;top:774px;width:9px;height:9px;background:rgb(180,180,182)"></div><div class="ab" style="left:1044px;top:783px;width:9px;height:9px;background:rgb(228,227,227)"></div><div class="ab" style="left:1053px;top:783px;width:9px;height:9px;background:rgb(242,241,243)"></div><div class="ab" style="left:1062px;top:783px;width:9px;height:9px;background:rgb(238,239,237)"></div><div class="ab" style="left:1071px;top:783px;width:9px;height:9px;background:rgb(238,236,243)"></div><div class="ab" style="left:1080px;top:783px;width:9px;height:9px;background:rgb(228,231,230)"></div><div class="ab" style="left:1089px;top:783px;width:9px;height:9px;background:rgb(242,244,247)"></div><div class="ab" style="left:1098px;top:783px;width:9px;height:9px;background:rgb(245,248,243)"></div><div class="ab" style="left:1107px;top:783px;width:9px;height:9px;background:rgb(238,240,241)"></div><div class="ab" style="left:1116px;top:783px;width:9px;height:9px;background:rgb(238,238,241)"></div><div class="ab" style="left:1125px;top:783px;width:9px;height:9px;background:rgb(238,240,237)"></div><div class="cell" style="left:1146px;top:769px;width:85px">优优电商2105</div><div class="ab" style="left:1235px;top:759px;width:68px;height:39px;border-radius:9px;background:rgba(255,255,255,.75);filter:blur(2px)"></div><div class="ab" style="left:1242px;top:765px;width:9px;height:9px;background:rgb(238,238,236)"></div><div class="ab" style="left:1251px;top:765px;width:9px;height:9px;background:rgb(242,241,241)"></div><div class="ab" style="left:1260px;top:765px;width:9px;height:9px;background:rgb(245,248,242)"></div><div class="ab" style="left:1269px;top:765px;width:9px;height:9px;background:rgb(238,240,239)"></div><div class="ab" style="left:1278px;top:765px;width:9px;height:9px;background:rgb(238,241,240)"></div><div class="ab" style="left:1287px;top:765px;width:9px;height:9px;background:rgb(228,231,225)"></div><div class="ab" style="left:1242px;top:774px;width:9px;height:9px;background:rgb(180,179,181)"></div><div class="ab" style="left:1251px;top:774px;width:9px;height:9px;background:rgb(206,209,209)"></div><div class="ab" style="left:1260px;top:774px;width:9px;height:9px;background:rgb(200,202,202)"></div><div class="ab" style="left:1269px;top:774px;width:9px;height:9px;background:rgb(168,167,172)"></div><div class="ab" style="left:1278px;top:774px;width:9px;height:9px;background:rgb(180,182,177)"></div><div class="ab" style="left:1287px;top:774px;width:9px;height:9px;background:rgb(168,166,165)"></div><div class="ab" style="left:1242px;top:783px;width:9px;height:9px;background:rgb(245,245,246)"></div><div class="ab" style="left:1251px;top:783px;width:9px;height:9px;background:rgb(228,230,230)"></div><div class="ab" style="left:1260px;top:783px;width:9px;height:9px;background:rgb(245,244,248)"></div><div class="ab" style="left:1269px;top:783px;width:9px;height:9px;background:rgb(245,245,244)"></div><div class="ab" style="left:1278px;top:783px;width:9px;height:9px;background:rgb(234,234,238)"></div><div class="ab" style="left:1287px;top:783px;width:9px;height:9px;background:rgb(234,233,231)"></div><div class="ab" style="left:1334px;top:759px;width:68px;height:39px;border-radius:9px;background:rgba(255,255,255,.75);filter:blur(2px)"></div><div class="ab" style="left:1341px;top:765px;width:9px;height:9px;background:rgb(234,237,233)"></div><div class="ab" style="left:1350px;top:765px;width:9px;height:9px;background:rgb(242,240,240)"></div><div class="ab" style="left:1359px;top:765px;width:9px;height:9px;background:rgb(234,237,235)"></div><div class="ab" style="left:1368px;top:765px;width:9px;height:9px;background:rgb(242,242,239)"></div><div class="ab" style="left:1377px;top:765px;width:9px;height:9px;background:rgb(228,231,233)"></div><div class="ab" style="left:1386px;top:765px;width:9px;height:9px;background:rgb(238,240,242)"></div><div class="ab" style="left:1341px;top:774px;width:9px;height:9px;background:rgb(206,208,210)"></div><div class="ab" style="left:1350px;top:774px;width:9px;height:9px;background:rgb(180,179,177)"></div><div class="ab" style="left:1359px;top:774px;width:9px;height:9px;background:rgb(168,166,173)"></div><div class="ab" style="left:1368px;top:774px;width:9px;height:9px;background:rgb(168,169,167)"></div><div class="ab" style="left:1377px;top:774px;width:9px;height:9px;background:rgb(180,179,177)"></div><div class="ab" style="left:1386px;top:774px;width:9px;height:9px;background:rgb(168,166,173)"></div><div class="ab" style="left:1341px;top:783px;width:9px;height:9px;background:rgb(234,233,237)"></div><div class="ab" style="left:1350px;top:783px;width:9px;height:9px;background:rgb(234,236,239)"></div><div class="ab" style="left:1359px;top:783px;width:9px;height:9px;background:rgb(242,244,241)"></div><div class="ab" style="left:1368px;top:783px;width:9px;height:9px;background:rgb(245,245,243)"></div><div class="ab" style="left:1377px;top:783px;width:9px;height:9px;background:rgb(238,241,235)"></div><div class="ab" style="left:1386px;top:783px;width:9px;height:9px;background:rgb(242,245,247)"></div><div class="cell" style="left:1449px;top:769px;width:85px">电子商务</div><div class="cell" style="left:1535px;top:769px;width:100px;text-align:center">统一安排</div><div class="cb" style="left:450px;top:811px"><svg style="position:absolute;left:3px;top:4px" width="12" height="10" viewBox="0 0 12 10"><path d="M.6 4.4L4.4 7.8L11.6 1.1" fill="none" stroke="#fff" stroke-width="1.1"/></svg></div><div class="cell" style="left:484px;top:808px;width:40px;text-align:center">9</div><div class="cell" style="left:540px;top:808px;width:85px">21级-学生岗位实习报备</div><div class="cell" style="left:626px;top:808px;width:100px;text-align:center">2024</div><div class="cell" style="left:727px;top:808px;width:100px;text-align:center">已过审</div><div class="cell" style="left:828px;top:808px;width:100px;text-align:center">在岗</div><div class="ab" style="left:938px;top:804px;width:59px;height:30px;border-radius:9px;background:rgba(255,255,255,.75);filter:blur(2px)"></div><div class="ab" style="left:945px;top:810px;width:9px;height:9px;background:rgb(212,213,215)"></div><div class="ab" style="left:954px;top:810px;width:9px;height:9px;background:rgb(232,230,236)"></div><div class="ab" style="left:963px;top:810px;width:9px;height:9px;background:rgb(220,219,218)"></div><div class="ab" style="left:972px;top:810px;width:9px;height:9px;background:rgb(226,225,223)"></div><div class="ab" style="left:981px;top:810px;width:9px;height:9px;background:rgb(212,212,213)"></div><div class="ab" style="left:945px;top:819px;width:9px;height:9px;background:rgb(224,222,225)"></div><div class="ab" style="left:954px;top:819px;width:9px;height:9px;background:rgb(224,226,227)"></div><div class="ab" style="left:963px;top:819px;width:9px;height:9px;background:rgb(224,226,225)"></div><div class="ab" style="left:972px;top:819px;width:9px;height:9px;background:rgb(204,207,204)"></div><div class="ab" style="left:981px;top:819px;width:9px;height:9px;background:rgb(190,192,187)"></div><div class="ab" style="left:1037px;top:804px;width:104px;height:30px;border-radius:9px;background:rgba(255,255,255,.75);filter:blur(2px)"></div><div class="ab" style="left:1044px;top:810px;width:9px;height:9px;background:rgb(220,220,220)"></div><div class="ab" style="left:1053px;top:810px;width:9px;height:9px;background:rgb(220,219,222)"></div><div class="ab" style="left:1062px;top:810px;width:9px;height:9px;background:rgb(220,221,222)"></div><div class="ab" style="left:1071px;top:810px;width:9px;height:9px;background:rgb(236,235,239)"></div><div class="ab" style="left:1080px;top:810px;width:9px;height:9px;background:rgb(236,237,240)"></div><div class="ab" style="left:1089px;top:810px;width:9px;height:9px;background:rgb(236,239,233)"></div><div class="ab" style="left:1098px;top:810px;width:9px;height:9px;background:rgb(212,213,212)"></div><div class="ab" style="left:1107px;top:810px;width:9px;height:9px;background:rgb(236,236,236)"></div><div class="ab" style="left:1116px;top:810px;width:9px;height:9px;background:rgb(232,234,230)"></div><div class="ab" style="left:1125px;top:810px;width:9px;height:9px;background:rgb(236,235,235)"></div><div class="ab" style="left:1044px;top:819px;width:9px;height:9px;background:rgb(190,188,188)"></div><div class="ab" style="left:1053px;top:819px;width:9px;height:9px;background:rgb(190,192,189)"></div><div class="ab" style="left:1062px;top:819px;width:9px;height:9px;background:rgb(204,203,201)"></div><div class="ab" style="left:1071px;top:819px;width:9px;height:9px;background:rgb(190,188,189)"></div><div class="ab" style="left:1080px;top:819px;width:9px;height:9px;background:rgb(224,227,221)"></div><div class="ab" style="left:1089px;top:819px;width:9px;height:9px;background:rgb(224,222,221)"></div><div class="ab" style="left:1098px;top:819px;width:9px;height:9px;background:rgb(190,192,192)"></div><div class="ab" style="left:1107px;top:819px;width:9px;height:9px;background:rgb(198,200,196)"></div><div class="ab" style="left:1116px;top:819px;width:9px;height:9px;background:rgb(224,225,222)"></div><div class="ab" style="left:1125px;top:819px;width:9px;height:9px;background:rgb(198,197,198)"></div><div class="cell" style="left:1146px;top:808px;width:85px">优优电商2105</div><div class="ab" style="left:1235px;top:804px;width:68px;height:30px;border-radius:9px;background:rgba(255,255,255,.75);filter:blur(2px)"></div><div class="ab" style="left:1242px;top:810px;width:9px;height:9px;background:rgb(212,210,209)"></div><div class="ab" style="left:1251px;top:810px;width:9px;height:9px;background:rgb(212,215,213)"></div><div class="ab" style="left:1260px;top:810px;width:9px;height:9px;background:rgb(232,230,231)"></div><div class="ab" style="left:1269px;top:810px;width:9px;height:9px;background:rgb(212,215,212)"></div><div class="ab" style="left:1278px;top:810px;width:9px;height:9px;background:rgb(226,226,228)"></div><div class="ab" style="left:1287px;top:810px;width:9px;height:9px;background:rgb(232,232,229)"></div><div class="ab" style="left:1242px;top:819px;width:9px;height:9px;background:rgb(204,204,205)"></div><div class="ab" style="left:1251px;top:819px;width:9px;height:9px;background:rgb(190,193,192)"></div><div class="ab" style="left:1260px;top:819px;width:9px;height:9px;background:rgb(204,206,209)"></div><div class="ab" style="left:1269px;top:819px;width:9px;height:9px;background:rgb(210,210,207)"></div><div class="ab" style="left:1278px;top:819px;width:9px;height:9px;background:rgb(210,208,213)"></div><div class="ab" style="left:1287px;top:819px;width:9px;height:9px;background:rgb(216,214,218)"></div><div class="ab" style="left:1334px;top:804px;width:68px;height:30px;border-radius:9px;background:rgba(255,255,255,.75);filter:blur(2px)"></div><div class="ab" style="left:1341px;top:810px;width:9px;height:9px;background:rgb(232,235,229)"></div><div class="ab" style="left:1350px;top:810px;width:9px;height:9px;background:rgb(236,238,236)"></div><div class="ab" style="left:1359px;top:810px;width:9px;height:9px;background:rgb(212,214,213)"></div><div class="ab" style="left:1368px;top:810px;width:9px;height:9px;background:rgb(220,221,217)"></div><div class="ab" style="left:1377px;top:810px;width:9px;height:9px;background:rgb(236,235,237)"></div><div class="ab" style="left:1386px;top:810px;width:9px;height:9px;background:rgb(212,210,214)"></div><div class="ab" style="left:1341px;top:819px;width:9px;height:9px;background:rgb(210,208,214)"></div><div class="ab" style="left:1350px;top:819px;width:9px;height:9px;background:rgb(224,223,228)"></div><div class="ab" style="left:1359px;top:819px;width:9px;height:9px;background:rgb(216,216,221)"></div><div class="ab" style="left:1368px;top:819px;width:9px;height:9px;background:rgb(204,206,203)"></div><div class="ab" style="left:1377px;top:819px;width:9px;height:9px;background:rgb(204,203,204)"></div><div class="ab" style="left:1386px;top:819px;width:9px;height:9px;background:rgb(210,209,208)"></div><div class="cell" style="left:1449px;top:808px;width:85px">电子商务</div><div class="cell" style="left:1535px;top:808px;width:100px;text-align:center">统一安排</div><div class="cb" style="left:450px;top:850px"><svg style="position:absolute;left:3px;top:4px" width="12" height="10" viewBox="0 0 12 10"><path d="M.6 4.4L4.4 7.8L11.6 1.1" fill="none" stroke="#fff" stroke-width="1.1"/></svg></div><div class="cell" style="left:484px;top:847px;width:40px;text-align:center">10</div><div class="cell" style="left:540px;top:847px;width:85px">21级-学生岗位实习报备</div><div class="cell" style="left:626px;top:847px;width:100px;text-align:center">2024</div><div class="cell" style="left:727px;top:847px;width:100px;text-align:center">已过审</div><div class="cell" style="left:828px;top:847px;width:100px;text-align:center">在岗</div><div class="ab" style="left:938px;top:840px;width:59px;height:30px;border-radius:9px;background:rgba(255,255,255,.75);filter:blur(2px)"></div><div class="ab" style="left:945px;top:846px;width:9px;height:9px;background:rgb(212,213,217)"></div><div class="ab" style="left:954px;top:846px;width:9px;height:9px;background:rgb(212,215,214)"></div><div class="ab" style="left:963px;top:846px;width:9px;height:9px;background:rgb(226,224,229)"></div><div class="ab" style="left:972px;top:846px;width:9px;height:9px;background:rgb(232,235,230)"></div><div class="ab" style="left:981px;top:846px;width:9px;height:9px;background:rgb(232,235,229)"></div><div class="ab" style="left:945px;top:855px;width:9px;height:9px;background:rgb(204,203,205)"></div><div class="ab" style="left:954px;top:855px;width:9px;height:9px;background:rgb(204,205,209)"></div><div class="ab" style="left:963px;top:855px;width:9px;height:9px;background:rgb(216,215,219)"></div><div class="ab" style="left:972px;top:855px;width:9px;height:9px;background:rgb(224,223,228)"></div><div class="ab" style="left:981px;top:855px;width:9px;height:9px;background:rgb(198,200,195)"></div><div class="ab" style="left:1037px;top:840px;width:104px;height:30px;border-radius:9px;background:rgba(255,255,255,.75);filter:blur(2px)"></div><div class="ab" style="left:1044px;top:846px;width:9px;height:9px;background:rgb(226,228,228)"></div><div class="ab" style="left:1053px;top:846px;width:9px;height:9px;background:rgb(236,235,240)"></div><div class="ab" style="left:1062px;top:846px;width:9px;height:9px;background:rgb(236,239,238)"></div><div class="ab" style="left:1071px;top:846px;width:9px;height:9px;background:rgb(220,221,224)"></div><div class="ab" style="left:1080px;top:846px;width:9px;height:9px;background:rgb(226,228,226)"></div><div class="ab" style="left:1089px;top:846px;width:9px;height:9px;background:rgb(220,220,224)"></div><div class="ab" style="left:1098px;top:846px;width:9px;height:9px;background:rgb(220,222,220)"></div><div class="ab" style="left:1107px;top:846px;width:9px;height:9px;background:rgb(226,226,225)"></div><div class="ab" style="left:1116px;top:846px;width:9px;height:9px;background:rgb(220,219,222)"></div><div class="ab" style="left:1125px;top:846px;width:9px;height:9px;background:rgb(236,238,238)"></div><div class="ab" style="left:1044px;top:855px;width:9px;height:9px;background:rgb(198,197,200)"></div><div class="ab" style="left:1053px;top:855px;width:9px;height:9px;background:rgb(198,198,196)"></div><div class="ab" style="left:1062px;top:855px;width:9px;height:9px;background:rgb(198,201,196)"></div><div class="ab" style="left:1071px;top:855px;width:9px;height:9px;background:rgb(198,199,197)"></div><div class="ab" style="left:1080px;top:855px;width:9px;height:9px;background:rgb(198,198,199)"></div><div class="ab" style="left:1089px;top:855px;width:9px;height:9px;background:rgb(210,210,210)"></div><div class="ab" style="left:1098px;top:855px;width:9px;height:9px;background:rgb(190,193,188)"></div><div class="ab" style="left:1107px;top:855px;width:9px;height:9px;background:rgb(204,203,207)"></div><div class="ab" style="left:1116px;top:855px;width:9px;height:9px;background:rgb(210,208,207)"></div><div class="ab" style="left:1125px;top:855px;width:9px;height:9px;background:rgb(210,211,210)"></div><div class="cell" style="left:1146px;top:847px;width:85px">优优电商2105</div><div class="ab" style="left:1235px;top:840px;width:68px;height:30px;border-radius:9px;background:rgba(255,255,255,.75);filter:blur(2px)"></div><div class="ab" style="left:1242px;top:846px;width:9px;height:9px;background:rgb(236,239,237)"></div><div class="ab" style="left:1251px;top:846px;width:9px;height:9px;background:rgb(232,230,231)"></div><div class="ab" style="left:1260px;top:846px;width:9px;height:9px;background:rgb(226,228,229)"></div><div class="ab" style="left:1269px;top:846px;width:9px;height:9px;background:rgb(212,215,212)"></div><div class="ab" style="left:1278px;top:846px;width:9px;height:9px;background:rgb(232,235,235)"></div><div class="ab" style="left:1287px;top:846px;width:9px;height:9px;background:rgb(220,223,220)"></div><div class="ab" style="left:1242px;top:855px;width:9px;height:9px;background:rgb(224,223,222)"></div><div class="ab" style="left:1251px;top:855px;width:9px;height:9px;background:rgb(210,211,212)"></div><div class="ab" style="left:1260px;top:855px;width:9px;height:9px;background:rgb(204,207,202)"></div><div class="ab" style="left:1269px;top:855px;width:9px;height:9px;background:rgb(210,209,213)"></div><div class="ab" style="left:1278px;top:855px;width:9px;height:9px;background:rgb(224,227,223)"></div><div class="ab" style="left:1287px;top:855px;width:9px;height:9px;background:rgb(204,205,208)"></div><div class="ab" style="left:1334px;top:840px;width:68px;height:30px;border-radius:9px;background:rgba(255,255,255,.75);filter:blur(2px)"></div><div class="ab" style="left:1341px;top:846px;width:9px;height:9px;background:rgb(232,230,235)"></div><div class="ab" style="left:1350px;top:846px;width:9px;height:9px;background:rgb(236,239,235)"></div><div class="ab" style="left:1359px;top:846px;width:9px;height:9px;background:rgb(226,224,229)"></div><div class="ab" style="left:1368px;top:846px;width:9px;height:9px;background:rgb(232,230,229)"></div><div class="ab" style="left:1377px;top:846px;width:9px;height:9px;background:rgb(226,228,226)"></div><div class="ab" style="left:1386px;top:846px;width:9px;height:9px;background:rgb(220,223,220)"></div><div class="ab" style="left:1341px;top:855px;width:9px;height:9px;background:rgb(216,216,214)"></div><div class="ab" style="left:1350px;top:855px;width:9px;height:9px;background:rgb(216,217,221)"></div><div class="ab" style="left:1359px;top:855px;width:9px;height:9px;background:rgb(198,201,202)"></div><div class="ab" style="left:1368px;top:855px;width:9px;height:9px;background:rgb(216,214,218)"></div><div class="ab" style="left:1377px;top:855px;width:9px;height:9px;background:rgb(216,216,219)"></div><div class="ab" style="left:1386px;top:855px;width:9px;height:9px;background:rgb(224,225,224)"></div><div class="cell" style="left:1449px;top:847px;width:85px">电子商务</div><div class="cell" style="left:1535px;top:847px;width:100px;text-align:center">统一安排</div></div></div>
<div class="ab" style="left:525px;top:411px;width:8px;height:446px;background:linear-gradient(90deg,rgba(0,0,0,.05),rgba(0,0,0,0))"></div>
<div class="ab" style="left:1591px;top:411px;width:8px;height:446px;background:linear-gradient(270deg,rgba(0,0,0,.05),rgba(0,0,0,0))"></div>
<div class="ab" style="left:1599px;top:411px;width:256px;height:76px;background:#fafafa"></div>
<div class="cell" style="left:1599px;top:439px;width:241px;text-align:center">操作</div>
<div class="ab" style="left:1599px;top:486px;width:241px;height:1px;background:#eee"></div>
<div class="ab" style="left:1599px;top:487px;width:241px;height:370px;overflow:hidden"><div class="ab" style="left:0;top:0px;width:241px;height:39px;background:#fff;border-bottom:1px solid #eee"></div><div class="ob" style="left:68px;top:11px;width:36px">详细</div><div class="ob" style="left:114px;top:11px;width:60px">修改密码</div><div class="ab" style="left:0;top:39px;width:241px;height:39px;background:#fafafa;border-bottom:1px solid #eee"></div><div class="ob" style="left:68px;top:50px;width:36px">详细</div><div class="ob" style="left:114px;top:50px;width:60px">修改密码</div><div class="ab" style="left:0;top:78px;width:241px;height:39px;background:#fff;border-bottom:1px solid #eee"></div><div class="ob" style="left:68px;top:89px;width:36px">详细</div><div class="ob" style="left:114px;top:89px;width:60px">修改密码</div><div class="ab" style="left:0;top:117px;width:241px;height:39px;background:#fafafa;border-bottom:1px solid #eee"></div><div class="ob" style="left:68px;top:128px;width:36px">详细</div><div class="ob" style="left:114px;top:128px;width:60px">修改密码</div><div class="ab" style="left:0;top:156px;width:241px;height:39px;background:#fff;border-bottom:1px solid #eee"></div><div class="ob" style="left:68px;top:167px;width:36px">详细</div><div class="ob" style="left:114px;top:167px;width:60px">修改密码</div><div class="ab" style="left:0;top:195px;width:241px;height:39px;background:#fafafa;border-bottom:1px solid #eee"></div><div class="ob" style="left:68px;top:206px;width:36px">详细</div><div class="ob" style="left:114px;top:206px;width:60px">修改密码</div><div class="ab" style="left:0;top:234px;width:241px;height:39px;background:#fff;border-bottom:1px solid #eee"></div><div class="ob" style="left:68px;top:245px;width:36px">详细</div><div class="ob" style="left:114px;top:245px;width:60px">修改密码</div><div class="ab" style="left:0;top:273px;width:241px;height:39px;background:#fafafa;border-bottom:1px solid #eee"></div><div class="ob" style="left:68px;top:284px;width:36px">详细</div><div class="ob" style="left:114px;top:284px;width:60px">修改密码</div><div class="ab" style="left:0;top:312px;width:241px;height:39px;background:#fff;border-bottom:1px solid #eee"></div><div class="ob" style="left:68px;top:323px;width:36px">详细</div><div class="ob" style="left:114px;top:323px;width:60px">修改密码</div><div class="ab" style="left:0;top:351px;width:241px;height:39px;background:#fafafa;border-bottom:1px solid #eee"></div><div class="ob" style="left:68px;top:362px;width:36px">详细</div><div class="ob" style="left:114px;top:362px;width:60px">修改密码</div></div>
<div class="ab" style="left:1599px;top:857px;width:241px;height:3px;background:linear-gradient(rgba(0,0,0,.05),rgba(0,0,0,0))"></div>
<div class="ab" style="left:1840px;top:487px;width:15px;height:370px;background:#fafafa"></div>
<div class="ab" style="left:1844px;top:495px;width:0;height:0;border-left:4.5px solid transparent;border-right:4.5px solid transparent;border-bottom:7px solid #8a8a8a"></div>
<div class="ab" style="left:1844px;top:841px;width:0;height:0;border-left:4.5px solid transparent;border-right:4.5px solid transparent;border-top:7px solid #8a8a8a"></div>
<div class="ab" style="left:1844px;top:510px;width:9px;height:153px;border-radius:4.5px;background:#8a8a8a"></div>
<div class="ab" style="left:435px;top:857px;width:1405px;height:13px;background:#fafafa"></div>
<div class="ab" style="left:1599px;top:857px;width:241px;height:3px;background:linear-gradient(rgba(0,0,0,.06),rgba(0,0,0,0))"></div>
<div class="ab" style="left:443px;top:859px;width:0;height:0;border-top:4.5px solid transparent;border-bottom:4.5px solid transparent;border-right:7px solid #8a8a8a"></div>
<div class="ab" style="left:1826px;top:859px;width:0;height:0;border-top:4.5px solid transparent;border-bottom:4.5px solid transparent;border-left:7px solid #8a8a8a"></div>
<div class="ab" style="left:458px;top:859px;width:386px;height:9px;border-radius:4.5px;background:#8a8a8a"></div>
<div class="ab" style="left:435px;top:870px;width:1420px;height:1px;background:#eee"></div>
<svg class="ab" style="left:450px;top:884px" width="10" height="14" viewBox="0 0 10 14"><path d="M8.5 1L2 7l6.5 6" fill="none" stroke="#d2d2d2" stroke-width="1.2"/></svg>
<div class="ab" style="left:474px;top:878px;width:31px;height:26px;background:#009688;border-radius:2px;color:#fff;text-align:center;line-height:26px;font-size:13px">1</div>
<div class="t" style="left:509px;top:881px;width:20px;text-align:center;color:#333;font-size:13px">2</div>
<div class="t" style="left:539px;top:881px;width:20px;text-align:center;color:#333;font-size:13px">3</div>
<svg class="ab" style="left:577px;top:884px" width="10" height="14" viewBox="0 0 10 14"><path d="M1.5 1L8 7l-6.5 6" fill="none" stroke="#333" stroke-width="1.2"/></svg>
<div class="t" style="left:602px;top:881px;color:#999;font-size:12px">到第</div>
<div class="ab" style="left:636px;top:878px;width:40px;height:26px;border:1px solid #e6e6e6;border-radius:2px;text-align:center;line-height:24px;font-size:13px;color:#333">1</div>
<div class="t" style="left:685px;top:881px;color:#999;font-size:12px">页</div>
<div class="ab" style="left:708px;top:878px;width:46px;height:26px;border:1px solid #e6e6e6;border-radius:2px;text-align:center;line-height:24px;font-size:12px;color:#333">确定</div>
<div class="t" style="left:764px;top:881px;color:#333;font-size:12px">合计：&nbsp;43 条</div>
<div class="ab" style="left:842px;top:878px;width:79px;height:26px;border:1px solid #e6e6e6;border-radius:2px;line-height:24px;font-size:12px;color:#333;padding-left:8px">20 条/页</div>
<svg class="ab" style="left:907px;top:887px" width="9" height="7" viewBox="0 0 9 7"><path d="M1 1.3l3.5 3.5L8 1.3" fill="none" stroke="#000" stroke-width="1.7"/></svg>
<div class="tip" style="left:132px;top:163px;width:234px">打开实习学生列表</div><div class="ab" style="left:127px;top:182px;width:0;height:0;border-top:5px solid transparent;border-bottom:5px solid transparent;border-right:5px solid rgba(0,0,0,.6)"></div><div class="badge" style="left:103px;top:177px">1</div>
<div class="tip" style="left:573px;top:507px;width:126px">勾选学生</div><div class="ab" style="left:568px;top:526px;width:0;height:0;border-top:5px solid transparent;border-bottom:5px solid transparent;border-right:5px solid rgba(0,0,0,.6)"></div><div class="badge" style="left:544px;top:521px">2</div>
<div class="tip" style="left:1579px;top:231px;width:180px">点击实习材料</div><div class="ab" style="left:1574px;top:250px;width:0;height:0;border-top:5px solid transparent;border-bottom:5px solid transparent;border-right:5px solid rgba(0,0,0,.6)"></div><div class="badge" style="left:1550px;top:245px">3</div>
<svg class="ab" style="left:0;top:0" width="1874" height="920" viewBox="0 0 1874 920">
<path d="M572.4 549.3L573.4 550.6L501.2 601.5L504 604.4L485 606.8L494.8 591.3L497.3 593.8Z" fill="#f83434"/>
<path d="M1673.4 279L1674.9 279L1725.5 359.5L1728.8 358.2L1730.8 376.8L1716.4 366L1718.7 365Z" fill="#f83434"/>
</svg>
</body></html>
